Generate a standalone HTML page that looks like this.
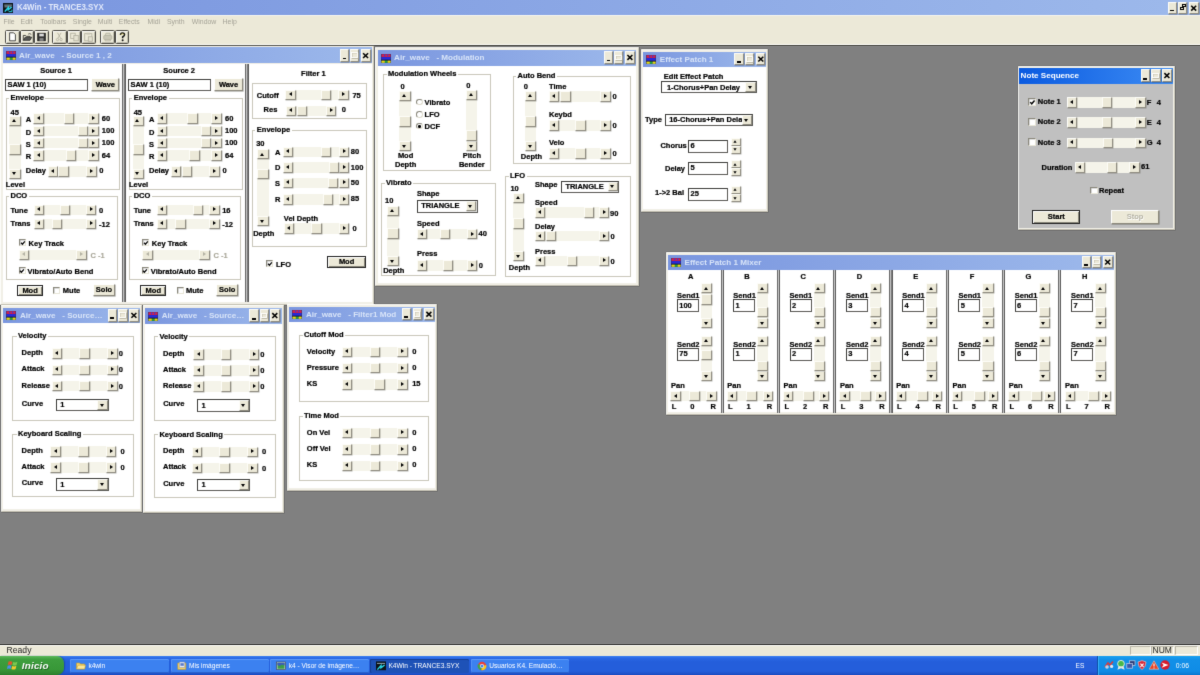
<!DOCTYPE html>
<html><head><meta charset="utf-8"><title>K4Win - TRANCE3.SYX</title>
<style>
*{box-sizing:border-box;margin:0;padding:0}
html,body{width:1200px;height:675px;overflow:hidden;background:#808080}
body{font-family:"Liberation Sans",sans-serif;font-size:7.5px;font-weight:bold;color:#111;position:relative}
#root{position:absolute;left:0;top:0;width:1200px;height:675px;overflow:hidden;will-change:transform;filter:url(#soft)}
#root div,#root i{position:absolute;display:block}
.t{white-space:nowrap;line-height:9px;height:9px;color:#000;-webkit-text-stroke:0.22px #000}
.g{color:#a8a698;-webkit-text-stroke:0.1px #a8a698}
.trk{background:#f5f4ea}
.btn{background:#ece9d8;border:1px solid;border-color:#fdfdf8 #8f8c80 #8f8c80 #fdfdf8;box-shadow:0.5px 0.5px 0 rgba(90,88,80,.45)}
.tb{box-shadow:0.5px 0.5px 0 rgba(60,60,60,.6)}
.grp{border:1px solid #c9c7ba;box-shadow:1px 1px 0 #fff, inset 1px 1px 0 #fff}
.edit{background:#fff;border:1px solid #3c3c3a;border-right-color:#5a5955;border-bottom-color:#5a5955;white-space:nowrap;overflow:hidden}
.edit span{position:absolute;left:1.4px;top:50%;margin-top:-5.3px;line-height:9px;color:#000;-webkit-text-stroke:0.2px #000}
.pb{background:#ece9d8;border:1px solid;border-color:#fff #8a877a #8a877a #fff;box-shadow:0.6px 0.6px 0 rgba(80,78,70,.55);text-align:center;color:#000;-webkit-text-stroke:0.22px #000;white-space:nowrap}
.pb.def{border-color:#222;box-shadow:inset 1px 1px 0 #fff, inset -1px -1px 0 #8a877a}
.pb.pdis{color:#b4b2a4;-webkit-text-stroke:0;text-shadow:0.5px 0.5px 0 #fff}
.chk{background:#fff;border:1px solid;border-color:#8a887c #e8e6d8 #e8e6d8 #8a887c;box-shadow:inset 0.6px 0.6px 0 #bbb}
.rad{background:#fff;border-radius:50%;border:1px solid;border-color:#8a887c #dddacc #dddacc #8a887c}
.dot{left:1.3px;top:1.3px;width:2.4px;height:2.4px;border-radius:50%;background:#000}
.al,.ar,.au,.ad{width:0;height:0;left:50%;top:50%;border:2.5px solid transparent}
.al{border-right-color:#000;border-left-width:0;margin:-2.5px 0 0 -1.8px;border-right-width:3px}
.ar{border-left-color:#000;border-right-width:0;margin:-2.5px 0 0 -1.2px;border-left-width:3px}
.au{border-bottom-color:#000;border-top-width:0;margin:-1.9px 0 0 -2.9px;border-bottom-width:3px;border-left-width:2.9px;border-right-width:2.9px}
.ad{border-top-color:#000;border-bottom-width:0;margin:-1.3px 0 0 -2.9px;border-top-width:3px;border-left-width:2.9px;border-right-width:2.9px}
.al.dis{border-right-color:#b4b2a4}.ar.dis{border-left-color:#b4b2a4}
.win{background:#f1efe6;border:1px solid;border-color:#fcfcf9 #d0cdc0 #c4c1b3 #fcfcf9;box-shadow:0.5px 0.5px 0 rgba(90,90,84,.55)}
.win.notop{border-top:none}
.ttl{background:linear-gradient(90deg,#7a96df,#9db9eb)}
.ttl.act{background:linear-gradient(90deg,#0a5ae0,#3d8cf4)}
.tt{font-size:8.1px;line-height:10px;height:10px;color:#d8e4f8;white-space:pre;overflow:hidden}
.tt.tta{color:#fff}
.ico{position:absolute;left:0;top:0}
.sep{background:linear-gradient(90deg,#6a6a6a 0,#666 24%,#c4c4c4 34%,#c8c8c8 54%,#5c5c5c 66%,#585858 100%)}
.m{font-weight:normal;font-size:6.9px;color:#a4a296;line-height:9px;white-space:nowrap}
.tk{font-weight:normal;font-size:6.6px;color:#fff;line-height:9px;white-space:nowrap}
.tkb{border-radius:1.5px;background:#3c81f0;box-shadow:inset 0 1px 0 #5e9af8, inset 0 -1px 0 #2a62cc, inset 1px 0 0 #5490f4}
.tkb.on{background:#1e52b7;box-shadow:inset 0 1px 0 #163f95, inset 1px 0 0 #163f95}
</style></head><body><svg width="0" height="0" style="position:absolute"><defs><filter id="soft" x="0" y="0" width="100%" height="100%" color-interpolation-filters="sRGB"><feConvolveMatrix order="3" kernelMatrix="0.01 0.08 0.01 0.08 0.64 0.08 0.01 0.08 0.01" divisor="1" edgeMode="duplicate" preserveAlpha="true"/></filter></defs></svg><div id="root">

<div class="" style="left:0px;top:0px;width:1200px;height:15.2px;background:linear-gradient(90deg,#7a96df,#9db9eb)"></div>
<div style="left:3px;top:3px;width:10.2px;height:9.6px;background:#101820"><svg viewBox="0 0 10 10" width="10.2" height="9.6" style="position:absolute;left:0;top:0"><rect width="10" height="10" fill="#0c1418"/><path d="M1 2.2 H9 M1.2 4 H8.5" stroke="#9fb0b8" stroke-width="1"/><path d="M1.5 9 L5.2 4.6 L5.2 7 L8.8 4.2" stroke="#28d8e8" stroke-width="1.5" fill="none"/><path d="M5.6 9 H9 V6.8" stroke="#28d8e8" stroke-width="1" fill="none"/></svg></div>
<div class="tt" style="left:16.8px;top:2.1px;font-size:9.2px;color:#e2e9fa;transform:scaleX(0.86);transform-origin:0 0;overflow:visible">K4Win - TRANCE3.SYX</div>
<div class="btn tb" style="left:1167.5px;top:1.5px;width:9.6px;height:12.2px;"><i style="left:1.4px;top:7.1px;width:3.8px;height:1.5px;background:#000"></i></div>
<div class="btn tb" style="left:1177.8px;top:1.5px;width:9.6px;height:12.2px;"><i style="left:3px;top:1.5px;width:4px;height:3.4px;border:1px solid #000;border-top-width:1.5px"></i><i style="left:1.2px;top:4.2px;width:4px;height:3.4px;border:1px solid #000;border-top-width:1.5px;background:#ece9d8"></i></div>
<div class="btn tb" style="left:1189px;top:1.5px;width:9.6px;height:12.2px;"><svg width="7.6" height="10.2" viewBox="0 0 7.6 10.2" style="position:absolute;left:0;top:0"><path d="M1.2 2.8 L6.2 7.6 M6.2 2.8 L1.2 7.6" stroke="#000" stroke-width="1.55"/></svg></div>
<div class="" style="left:0px;top:15.2px;width:1200px;height:30.2px;background:#ece9d8;border-top:1px solid #f6f5ee"></div>
<div class="m" style="left:3.4px;top:17.4px">File</div>
<div class="m" style="left:20.6px;top:17.4px">Edit</div>
<div class="m" style="left:40.2px;top:17.4px">Toolbars</div>
<div class="m" style="left:72.8px;top:17.4px">Single</div>
<div class="m" style="left:97.8px;top:17.4px">Multi</div>
<div class="m" style="left:118.8px;top:17.4px">Effects</div>
<div class="m" style="left:147.6px;top:17.4px">Midi</div>
<div class="m" style="left:167px;top:17.4px">Synth</div>
<div class="m" style="left:191.8px;top:17.4px">Window</div>
<div class="m" style="left:222.6px;top:17.4px">Help</div>
<div class="" style="left:0px;top:44.4px;width:1200px;height:1px;background:#fbfaf4"></div>
<div class="" style="left:0px;top:45.2px;width:1200px;height:1px;background:#55554f"></div>
<div class="" style="left:5.2px;top:30px;width:14.6px;height:13.6px;background:#ece9d8;border:1px solid #4c4a44;border-radius:1.5px;box-shadow:inset 0.7px 0.7px 0 #fff, inset -0.7px -0.7px 0 #b4b1a2"><svg viewBox="0 0 14 13" width="12.6" height="11.6" style="position:absolute;left:0;top:0"><path d="M4 2 H8.5 L10.5 4 V11 H4 Z" fill="#fff" stroke="#222" stroke-width="0.9"/></svg></div>
<div class="" style="left:19.6px;top:30px;width:14.6px;height:13.6px;background:#ece9d8;border:1px solid #4c4a44;border-radius:1.5px;box-shadow:inset 0.7px 0.7px 0 #fff, inset -0.7px -0.7px 0 #b4b1a2"><svg viewBox="0 0 14 13" width="12.6" height="11.6" style="position:absolute;left:0;top:0"><path d="M2.5 10.5 V5 H5 L6 6 H10 V7" fill="none" stroke="#222" stroke-width="0.9"/><path d="M2.5 10.5 L4.5 7 H12 L10 10.5 Z" fill="#555" stroke="#222" stroke-width="0.8"/><path d="M8 3.5 Q10 2 11.5 4" stroke="#222" stroke-width="0.8" fill="none"/></svg></div>
<div class="" style="left:34px;top:30px;width:14.6px;height:13.6px;background:#ece9d8;border:1px solid #4c4a44;border-radius:1.5px;box-shadow:inset 0.7px 0.7px 0 #fff, inset -0.7px -0.7px 0 #b4b1a2"><svg viewBox="0 0 14 13" width="12.6" height="11.6" style="position:absolute;left:0;top:0"><rect x="3" y="2.5" width="8.5" height="8.5" fill="#333" stroke="#111" stroke-width="0.8"/><rect x="4.8" y="3" width="5" height="3" fill="#ddd"/><rect x="5" y="8" width="4.5" height="3" fill="#888"/></svg></div>
<div class="" style="left:52.4px;top:30px;width:14.6px;height:13.6px;background:#ece9d8;border:1px solid #4c4a44;border-radius:1.5px;box-shadow:inset 0.7px 0.7px 0 #fff, inset -0.7px -0.7px 0 #b4b1a2"><svg viewBox="0 0 14 13" width="12.6" height="11.6" style="position:absolute;left:0;top:0"><path d="M5 2 L8.5 8 M9 2 L5.5 8" stroke="#b0ae9e" stroke-width="0.9"/><circle cx="5" cy="9.6" r="1.3" fill="none" stroke="#b0ae9e" stroke-width="0.9"/><circle cx="9" cy="9.6" r="1.3" fill="none" stroke="#b0ae9e" stroke-width="0.9"/></svg></div>
<div class="" style="left:66.9px;top:30px;width:14.6px;height:13.6px;background:#ece9d8;border:1px solid #4c4a44;border-radius:1.5px;box-shadow:inset 0.7px 0.7px 0 #fff, inset -0.7px -0.7px 0 #b4b1a2"><svg viewBox="0 0 14 13" width="12.6" height="11.6" style="position:absolute;left:0;top:0"><rect x="3" y="2.5" width="5" height="6" fill="none" stroke="#b0ae9e" stroke-width="0.9"/><rect x="6.5" y="5" width="5" height="6" fill="#e4e1d0" stroke="#b0ae9e" stroke-width="0.9"/></svg></div>
<div class="" style="left:81.4px;top:30px;width:14.6px;height:13.6px;background:#ece9d8;border:1px solid #4c4a44;border-radius:1.5px;box-shadow:inset 0.7px 0.7px 0 #fff, inset -0.7px -0.7px 0 #b4b1a2"><svg viewBox="0 0 14 13" width="12.6" height="11.6" style="position:absolute;left:0;top:0"><rect x="3" y="3" width="8" height="8" fill="none" stroke="#b0ae9e" stroke-width="0.9"/><rect x="5" y="2" width="4" height="2" fill="#c8c5b4"/><rect x="7" y="6.5" width="4.5" height="5" fill="#e4e1d0" stroke="#b0ae9e" stroke-width="0.9"/></svg></div>
<div class="" style="left:100.2px;top:30px;width:14.6px;height:13.6px;background:#ece9d8;border:1px solid #4c4a44;border-radius:1.5px;box-shadow:inset 0.7px 0.7px 0 #fff, inset -0.7px -0.7px 0 #b4b1a2"><svg viewBox="0 0 14 13" width="12.6" height="11.6" style="position:absolute;left:0;top:0"><path d="M4.5 5 L5.5 2.5 H10 L10.5 5" fill="#dcd9c8" stroke="#b0ae9e" stroke-width="0.9"/><rect x="3" y="5" width="9" height="4.5" rx="1" fill="#c8c5b4" stroke="#b0ae9e" stroke-width="0.9"/><path d="M4.5 9.5 V11 H10.5 V9.5" fill="none" stroke="#b0ae9e" stroke-width="0.9"/></svg></div>
<div class="" style="left:114.8px;top:30px;width:14.6px;height:13.6px;background:#ece9d8;border:1px solid #4c4a44;border-radius:1.5px;box-shadow:inset 0.7px 0.7px 0 #fff, inset -0.7px -0.7px 0 #b4b1a2"><svg viewBox="0 0 14 13" width="12.6" height="11.6" style="position:absolute;left:0;top:0"><path d="M5 4.5 Q5 2.2 7.2 2.2 Q9.5 2.2 9.5 4.3 Q9.5 5.6 7.4 6.6 V8.2" fill="none" stroke="#111" stroke-width="1.7"/><path d="M5.6 4.4 Q5.6 3 7.2 3 Q8.6 3 8.6 4.3" fill="none" stroke="#e8d860" stroke-width="0.7"/><circle cx="7.4" cy="10.3" r="1.1" fill="#111"/></svg></div>
<div class="win notop" style="left:0px;top:46.2px;width:374.4px;height:258.4px;"></div>
<div class="" style="left:2.6px;top:63.5px;width:369px;height:238.5px;background:#fff"></div>
<div class="ttl" style="left:2.6px;top:46.6px;width:369px;height:16.9px;"></div>
<div style="left:5.6px;top:50.75px;width:10px;height:9px"><svg class="ico" viewBox="0 0 10 9" width="10" height="9"><rect x="0" y="0" width="10" height="9" fill="#30306a"/><rect x="0.5" y="0.3" width="9" height="2.6" fill="#d8204c"/><rect x="3" y="0.6" width="1.3" height="1.6" fill="#3838d8"/><rect x="6" y="0.6" width="1.3" height="1.6" fill="#3838d8"/><rect x="0.5" y="3.1" width="9" height="2.6" fill="#2828e0"/><rect x="0" y="5.8" width="10" height="1" fill="#101030"/><rect x="0.5" y="6.6" width="3.3" height="2.2" fill="#e8e010"/><rect x="4" y="6.6" width="2.4" height="2.2" fill="#20a838"/><rect x="6.6" y="6.6" width="3" height="2.2" fill="#e8e010"/></svg></div>
<div class="tt" style="left:19.1px;top:50.55px;width:320.1px">Air_wave   - Source 1 , 2</div>
<div class="btn tb" style="left:340.2px;top:49.1px;width:9.2px;height:13px;"><i style="left:1.4px;top:7.9px;width:3.8px;height:1.5px;background:#000"></i></div>
<div class="btn tb" style="left:350.2px;top:49.1px;width:9.2px;height:13px;"><i style="left:0.3px;top:2.3px;width:6.3px;height:5.6px;border:1px solid #fdfdfa;border-top-width:1.4px;box-shadow:0.7px 0.7px 0 #aaa696, inset 0.6px 0.6px 0 #c8c4b4"></i></div>
<div class="btn tb" style="left:361.2px;top:49.1px;width:9.4px;height:13px;"><svg width="7.4" height="11" viewBox="0 0 7.4 11" style="position:absolute;left:0;top:0"><path d="M1.1 3.2 L6.1 8 M6.1 3.2 L1.1 8" stroke="#000" stroke-width="1.55"/></svg></div>
<div class="sep" style="left:121.8px;top:63.6px;width:4.4px;height:238.8px;"></div>
<div class="sep" style="left:245px;top:63.6px;width:4.4px;height:238.8px;"></div>
<div class="t" style="left:16px;top:66px;width:80px;text-align:center;">Source 1</div>
<div class="edit" style="left:5px;top:79px;width:82.5px;height:12.2px;"><span>SAW 1 (10)</span></div>
<div class="pb" style="left:91.2px;top:77.6px;width:28.3px;height:13.4px;line-height:11.4px">Wave</div>
<div class="grp" style="left:5.5px;top:97.5px;width:114px;height:92px;"></div>
<div class="t" style="left:9px;top:92.7px;background:#fff;padding:0 1.5px">Envelope</div>
<div class="t" style="left:10.5px;top:107.5px;">45</div>
<div class="trk" style="left:9.4px;top:116.3px;width:11.2px;height:62.4px;"></div>
<div class="btn" style="left:9.4px;top:116.3px;width:11.2px;height:10px;"><i class="au"></i></div>
<div class="btn" style="left:9.4px;top:168.7px;width:11.2px;height:10px;"><i class="ad"></i></div>
<div class="btn" style="left:9.4px;top:144.3px;width:11.2px;height:10.4px;"></div>
<div class="t" style="left:25.8px;top:115px;">A</div>
<div class="trk" style="left:33.4px;top:113.4px;width:65.2px;height:10.4px;"></div>
<div class="btn" style="left:33.4px;top:113.4px;width:10.4px;height:10.4px;"><i class="al"></i></div>
<div class="btn" style="left:88.2px;top:113.4px;width:10.4px;height:10.4px;"><i class="ar"></i></div>
<div class="btn" style="left:64px;top:113.4px;width:10.4px;height:10.4px;"></div>
<div class="t" style="left:101.8px;top:113.8px;">60</div>
<div class="t" style="left:25.8px;top:127.6px;">D</div>
<div class="trk" style="left:33.4px;top:126px;width:65.2px;height:10.4px;"></div>
<div class="btn" style="left:33.4px;top:126px;width:10.4px;height:10.4px;"><i class="al"></i></div>
<div class="btn" style="left:88.2px;top:126px;width:10.4px;height:10.4px;"><i class="ar"></i></div>
<div class="btn" style="left:77.8px;top:126px;width:10.4px;height:10.4px;"></div>
<div class="t" style="left:101.8px;top:126.4px;">100</div>
<div class="t" style="left:25.8px;top:139.6px;">S</div>
<div class="trk" style="left:33.4px;top:138px;width:65.2px;height:10.4px;"></div>
<div class="btn" style="left:33.4px;top:138px;width:10.4px;height:10.4px;"><i class="al"></i></div>
<div class="btn" style="left:88.2px;top:138px;width:10.4px;height:10.4px;"><i class="ar"></i></div>
<div class="btn" style="left:77.8px;top:138px;width:10.4px;height:10.4px;"></div>
<div class="t" style="left:101.8px;top:138.4px;">100</div>
<div class="t" style="left:25.8px;top:151.9px;">R</div>
<div class="trk" style="left:33.4px;top:150.3px;width:65.2px;height:10.4px;"></div>
<div class="btn" style="left:33.4px;top:150.3px;width:10.4px;height:10.4px;"><i class="al"></i></div>
<div class="btn" style="left:88.2px;top:150.3px;width:10.4px;height:10.4px;"><i class="ar"></i></div>
<div class="btn" style="left:66px;top:150.3px;width:10.4px;height:10.4px;"></div>
<div class="t" style="left:101.8px;top:150.7px;">64</div>
<div class="t" style="left:25.8px;top:166px;">Delay</div>
<div class="trk" style="left:47.6px;top:166.4px;width:49px;height:10.6px;"></div>
<div class="btn" style="left:47.6px;top:166.4px;width:10.4px;height:10.6px;"><i class="al"></i></div>
<div class="btn" style="left:86.2px;top:166.4px;width:10.4px;height:10.6px;"><i class="ar"></i></div>
<div class="btn" style="left:58.4px;top:166.4px;width:10.4px;height:10.6px;"></div>
<div class="t" style="left:99.2px;top:165.8px;">0</div>
<div class="t" style="left:5.8px;top:179.8px;">Level</div>
<div class="grp" style="left:5.5px;top:196.2px;width:112px;height:84.2px;"></div>
<div class="t" style="left:9px;top:191.4px;background:#fff;padding:0 1.5px">DCO</div>
<div class="t" style="left:10.5px;top:205.5px;">Tune</div>
<div class="trk" style="left:33.8px;top:204.8px;width:62.6px;height:10.4px;"></div>
<div class="btn" style="left:33.8px;top:204.8px;width:10.4px;height:10.4px;"><i class="al"></i></div>
<div class="btn" style="left:86px;top:204.8px;width:10.4px;height:10.4px;"><i class="ar"></i></div>
<div class="btn" style="left:60px;top:204.8px;width:10.4px;height:10.4px;"></div>
<div class="t" style="left:99px;top:205.8px;">0</div>
<div class="t" style="left:10.5px;top:218.9px;">Trans</div>
<div class="trk" style="left:33.8px;top:218.6px;width:62.6px;height:10.4px;"></div>
<div class="btn" style="left:33.8px;top:218.6px;width:10.4px;height:10.4px;"><i class="al"></i></div>
<div class="btn" style="left:86px;top:218.6px;width:10.4px;height:10.4px;"><i class="ar"></i></div>
<div class="btn" style="left:52px;top:218.6px;width:10.4px;height:10.4px;"></div>
<div class="t" style="left:99px;top:220.3px;">-12</div>
<div class="chk" style="left:19.2px;top:239.2px;width:7px;height:7px;"><svg width="5.8" height="5.8" viewBox="0 0 7 7" style="position:absolute;left:-0.4px;top:-0.4px"><path d="M1.3 3.3 L2.9 5.1 L5.9 1.6" stroke="#000" stroke-width="1.5" fill="none"/></svg></div>
<div class="t" style="left:28.6px;top:238.5px;">Key Track</div>
<div class="trk" style="left:19px;top:249.8px;width:67.6px;height:10.4px;"></div>
<div class="btn" style="left:19px;top:249.8px;width:10.4px;height:10.4px;"><i class="al dis"></i></div>
<div class="btn" style="left:76.2px;top:249.8px;width:10.4px;height:10.4px;"><i class="ar dis"></i></div>
<div class="t g" style="left:90.4px;top:250.8px;">C -1</div>
<div class="chk" style="left:18.6px;top:267.3px;width:7px;height:7px;"><svg width="5.8" height="5.8" viewBox="0 0 7 7" style="position:absolute;left:-0.4px;top:-0.4px"><path d="M1.3 3.3 L2.9 5.1 L5.9 1.6" stroke="#000" stroke-width="1.5" fill="none"/></svg></div>
<div class="t" style="left:27.6px;top:266.5px;">Vibrato/Auto Bend</div>
<div class="pb def" style="left:17px;top:285px;width:26.2px;height:11.2px;line-height:9.2px">Mod</div>
<div class="chk" style="left:53.4px;top:286.5px;width:7px;height:7px;"></div>
<div class="t" style="left:62.8px;top:285.8px;">Mute</div>
<div class="pb" style="left:93.2px;top:284.2px;width:21.6px;height:11.8px;line-height:9.8px">Solo</div>
<div class="t" style="left:139.2px;top:66px;width:80px;text-align:center;">Source 2</div>
<div class="edit" style="left:128.2px;top:79px;width:82.5px;height:12.2px;"><span>SAW 1 (10)</span></div>
<div class="pb" style="left:214.4px;top:77.6px;width:28.3px;height:13.4px;line-height:11.4px">Wave</div>
<div class="grp" style="left:128.7px;top:97.5px;width:114px;height:92px;"></div>
<div class="t" style="left:132.2px;top:92.7px;background:#fff;padding:0 1.5px">Envelope</div>
<div class="t" style="left:133.7px;top:107.5px;">45</div>
<div class="trk" style="left:132.6px;top:116.3px;width:11.2px;height:62.4px;"></div>
<div class="btn" style="left:132.6px;top:116.3px;width:11.2px;height:10px;"><i class="au"></i></div>
<div class="btn" style="left:132.6px;top:168.7px;width:11.2px;height:10px;"><i class="ad"></i></div>
<div class="btn" style="left:132.6px;top:144.3px;width:11.2px;height:10.4px;"></div>
<div class="t" style="left:149px;top:115px;">A</div>
<div class="trk" style="left:156.6px;top:113.4px;width:65.2px;height:10.4px;"></div>
<div class="btn" style="left:156.6px;top:113.4px;width:10.4px;height:10.4px;"><i class="al"></i></div>
<div class="btn" style="left:211.4px;top:113.4px;width:10.4px;height:10.4px;"><i class="ar"></i></div>
<div class="btn" style="left:187.2px;top:113.4px;width:10.4px;height:10.4px;"></div>
<div class="t" style="left:225px;top:113.8px;">60</div>
<div class="t" style="left:149px;top:127.6px;">D</div>
<div class="trk" style="left:156.6px;top:126px;width:65.2px;height:10.4px;"></div>
<div class="btn" style="left:156.6px;top:126px;width:10.4px;height:10.4px;"><i class="al"></i></div>
<div class="btn" style="left:211.4px;top:126px;width:10.4px;height:10.4px;"><i class="ar"></i></div>
<div class="btn" style="left:201px;top:126px;width:10.4px;height:10.4px;"></div>
<div class="t" style="left:225px;top:126.4px;">100</div>
<div class="t" style="left:149px;top:139.6px;">S</div>
<div class="trk" style="left:156.6px;top:138px;width:65.2px;height:10.4px;"></div>
<div class="btn" style="left:156.6px;top:138px;width:10.4px;height:10.4px;"><i class="al"></i></div>
<div class="btn" style="left:211.4px;top:138px;width:10.4px;height:10.4px;"><i class="ar"></i></div>
<div class="btn" style="left:201px;top:138px;width:10.4px;height:10.4px;"></div>
<div class="t" style="left:225px;top:138.4px;">100</div>
<div class="t" style="left:149px;top:151.9px;">R</div>
<div class="trk" style="left:156.6px;top:150.3px;width:65.2px;height:10.4px;"></div>
<div class="btn" style="left:156.6px;top:150.3px;width:10.4px;height:10.4px;"><i class="al"></i></div>
<div class="btn" style="left:211.4px;top:150.3px;width:10.4px;height:10.4px;"><i class="ar"></i></div>
<div class="btn" style="left:189.2px;top:150.3px;width:10.4px;height:10.4px;"></div>
<div class="t" style="left:225px;top:150.7px;">64</div>
<div class="t" style="left:149px;top:166px;">Delay</div>
<div class="trk" style="left:170.8px;top:166.4px;width:49px;height:10.6px;"></div>
<div class="btn" style="left:170.8px;top:166.4px;width:10.4px;height:10.6px;"><i class="al"></i></div>
<div class="btn" style="left:209.4px;top:166.4px;width:10.4px;height:10.6px;"><i class="ar"></i></div>
<div class="btn" style="left:181.6px;top:166.4px;width:10.4px;height:10.6px;"></div>
<div class="t" style="left:222.4px;top:165.8px;">0</div>
<div class="t" style="left:129px;top:179.8px;">Level</div>
<div class="grp" style="left:128.7px;top:196.2px;width:112px;height:84.2px;"></div>
<div class="t" style="left:132.2px;top:191.4px;background:#fff;padding:0 1.5px">DCO</div>
<div class="t" style="left:133.7px;top:205.5px;">Tune</div>
<div class="trk" style="left:157px;top:204.8px;width:62.6px;height:10.4px;"></div>
<div class="btn" style="left:157px;top:204.8px;width:10.4px;height:10.4px;"><i class="al"></i></div>
<div class="btn" style="left:209.2px;top:204.8px;width:10.4px;height:10.4px;"><i class="ar"></i></div>
<div class="btn" style="left:192.8px;top:204.8px;width:10.4px;height:10.4px;"></div>
<div class="t" style="left:222.2px;top:205.8px;">16</div>
<div class="t" style="left:133.7px;top:218.9px;">Trans</div>
<div class="trk" style="left:157px;top:218.6px;width:62.6px;height:10.4px;"></div>
<div class="btn" style="left:157px;top:218.6px;width:10.4px;height:10.4px;"><i class="al"></i></div>
<div class="btn" style="left:209.2px;top:218.6px;width:10.4px;height:10.4px;"><i class="ar"></i></div>
<div class="btn" style="left:175.2px;top:218.6px;width:10.4px;height:10.4px;"></div>
<div class="t" style="left:222.2px;top:220.3px;">-12</div>
<div class="chk" style="left:142.4px;top:239.2px;width:7px;height:7px;"><svg width="5.8" height="5.8" viewBox="0 0 7 7" style="position:absolute;left:-0.4px;top:-0.4px"><path d="M1.3 3.3 L2.9 5.1 L5.9 1.6" stroke="#000" stroke-width="1.5" fill="none"/></svg></div>
<div class="t" style="left:151.8px;top:238.5px;">Key Track</div>
<div class="trk" style="left:142.2px;top:249.8px;width:67.6px;height:10.4px;"></div>
<div class="btn" style="left:142.2px;top:249.8px;width:10.4px;height:10.4px;"><i class="al dis"></i></div>
<div class="btn" style="left:199.4px;top:249.8px;width:10.4px;height:10.4px;"><i class="ar dis"></i></div>
<div class="t g" style="left:213.6px;top:250.8px;">C -1</div>
<div class="chk" style="left:141.8px;top:267.3px;width:7px;height:7px;"><svg width="5.8" height="5.8" viewBox="0 0 7 7" style="position:absolute;left:-0.4px;top:-0.4px"><path d="M1.3 3.3 L2.9 5.1 L5.9 1.6" stroke="#000" stroke-width="1.5" fill="none"/></svg></div>
<div class="t" style="left:150.8px;top:266.5px;">Vibrato/Auto Bend</div>
<div class="pb def" style="left:140.2px;top:285px;width:26.2px;height:11.2px;line-height:9.2px">Mod</div>
<div class="chk" style="left:176.6px;top:286.5px;width:7px;height:7px;"></div>
<div class="t" style="left:186px;top:285.8px;">Mute</div>
<div class="pb" style="left:216.4px;top:284.2px;width:21.6px;height:11.8px;line-height:9.8px">Solo</div>
<div class="t" style="left:273.4px;top:68.5px;width:80px;text-align:center;">Filter 1</div>
<div class="grp" style="left:252px;top:83px;width:115px;height:36px;"></div>
<div class="t" style="left:256.8px;top:91.1px;">Cutoff</div>
<div class="trk" style="left:285.4px;top:89.6px;width:63.4px;height:10.4px;"></div>
<div class="btn" style="left:285.4px;top:89.6px;width:10.4px;height:10.4px;"><i class="al"></i></div>
<div class="btn" style="left:338.4px;top:89.6px;width:10.4px;height:10.4px;"><i class="ar"></i></div>
<div class="btn" style="left:320.6px;top:89.6px;width:10.4px;height:10.4px;"></div>
<div class="t" style="left:352.4px;top:90.5px;">75</div>
<div class="t" style="left:263.6px;top:104.9px;">Res</div>
<div class="trk" style="left:286px;top:105.6px;width:50.2px;height:10.4px;"></div>
<div class="btn" style="left:286px;top:105.6px;width:10.4px;height:10.4px;"><i class="al"></i></div>
<div class="btn" style="left:325.8px;top:105.6px;width:10.4px;height:10.4px;"><i class="ar"></i></div>
<div class="btn" style="left:297px;top:105.6px;width:10.4px;height:10.4px;"></div>
<div class="t" style="left:341.8px;top:105.1px;">0</div>
<div class="grp" style="left:252px;top:130px;width:115px;height:116.8px;"></div>
<div class="t" style="left:255.3px;top:125.2px;background:#fff;padding:0 1.5px">Envelope</div>
<div class="t" style="left:256.2px;top:138.5px;">30</div>
<div class="trk" style="left:257.4px;top:149.4px;width:11.2px;height:76.4px;"></div>
<div class="btn" style="left:257.4px;top:149.4px;width:11.2px;height:10px;"><i class="au"></i></div>
<div class="btn" style="left:257.4px;top:215.8px;width:11.2px;height:10px;"><i class="ad"></i></div>
<div class="btn" style="left:257.4px;top:168.8px;width:11.2px;height:10.2px;"></div>
<div class="t" style="left:275px;top:147.5px;">A</div>
<div class="trk" style="left:283px;top:146.6px;width:66px;height:10.6px;"></div>
<div class="btn" style="left:283px;top:146.6px;width:10.4px;height:10.6px;"><i class="al"></i></div>
<div class="btn" style="left:338.6px;top:146.6px;width:10.4px;height:10.6px;"><i class="ar"></i></div>
<div class="btn" style="left:321px;top:146.6px;width:10.4px;height:10.6px;"></div>
<div class="t" style="left:350.8px;top:146.9px;">80</div>
<div class="t" style="left:275px;top:163.1px;">D</div>
<div class="trk" style="left:283px;top:162.2px;width:66px;height:10.6px;"></div>
<div class="btn" style="left:283px;top:162.2px;width:10.4px;height:10.6px;"><i class="al"></i></div>
<div class="btn" style="left:338.6px;top:162.2px;width:10.4px;height:10.6px;"><i class="ar"></i></div>
<div class="btn" style="left:328.6px;top:162.2px;width:10.4px;height:10.6px;"></div>
<div class="t" style="left:350.8px;top:162.5px;">100</div>
<div class="t" style="left:275px;top:178.5px;">S</div>
<div class="trk" style="left:283px;top:177.6px;width:66px;height:10.6px;"></div>
<div class="btn" style="left:283px;top:177.6px;width:10.4px;height:10.6px;"><i class="al"></i></div>
<div class="btn" style="left:338.6px;top:177.6px;width:10.4px;height:10.6px;"><i class="ar"></i></div>
<div class="btn" style="left:328px;top:177.6px;width:10.4px;height:10.6px;"></div>
<div class="t" style="left:350.8px;top:177.9px;">50</div>
<div class="t" style="left:275px;top:194.9px;">R</div>
<div class="trk" style="left:283px;top:194px;width:66px;height:10.6px;"></div>
<div class="btn" style="left:283px;top:194px;width:10.4px;height:10.6px;"><i class="al"></i></div>
<div class="btn" style="left:338.6px;top:194px;width:10.4px;height:10.6px;"><i class="ar"></i></div>
<div class="btn" style="left:323px;top:194px;width:10.4px;height:10.6px;"></div>
<div class="t" style="left:350.8px;top:194.3px;">85</div>
<div class="t" style="left:283.8px;top:214.1px;">Vel Depth</div>
<div class="trk" style="left:283.8px;top:223px;width:65.4px;height:10.6px;"></div>
<div class="btn" style="left:283.8px;top:223px;width:10.4px;height:10.6px;"><i class="al"></i></div>
<div class="btn" style="left:338.8px;top:223px;width:10.4px;height:10.6px;"><i class="ar"></i></div>
<div class="btn" style="left:311px;top:223px;width:10.6px;height:10.6px;"></div>
<div class="t" style="left:352.4px;top:223.9px;">0</div>
<div class="t" style="left:253.2px;top:228.5px;">Depth</div>
<div class="chk" style="left:266.2px;top:260.1px;width:7px;height:7px;"><svg width="5.8" height="5.8" viewBox="0 0 7 7" style="position:absolute;left:-0.4px;top:-0.4px"><path d="M1.3 3.3 L2.9 5.1 L5.9 1.6" stroke="#000" stroke-width="1.5" fill="none"/></svg></div>
<div class="t" style="left:276px;top:259.5px;">LFO</div>
<div class="pb def" style="left:327.2px;top:255.6px;width:38.8px;height:12.2px;line-height:10.2px">Mod</div>
<div class="win" style="left:375px;top:47px;width:264px;height:238.6px;"></div>
<div class="" style="left:377.6px;top:65.6px;width:258.9px;height:217.4px;background:#fff"></div>
<div class="ttl" style="left:377.6px;top:50px;width:258.9px;height:15.6px;"></div>
<div style="left:380.6px;top:53.5px;width:10px;height:9px"><svg class="ico" viewBox="0 0 10 9" width="10" height="9"><rect x="0" y="0" width="10" height="9" fill="#30306a"/><rect x="0.5" y="0.3" width="9" height="2.6" fill="#d8204c"/><rect x="3" y="0.6" width="1.3" height="1.6" fill="#3838d8"/><rect x="6" y="0.6" width="1.3" height="1.6" fill="#3838d8"/><rect x="0.5" y="3.1" width="9" height="2.6" fill="#2828e0"/><rect x="0" y="5.8" width="10" height="1" fill="#101030"/><rect x="0.5" y="6.6" width="3.3" height="2.2" fill="#e8e010"/><rect x="4" y="6.6" width="2.4" height="2.2" fill="#20a838"/><rect x="6.6" y="6.6" width="3" height="2.2" fill="#e8e010"/></svg></div>
<div class="tt" style="left:394.1px;top:53.3px;width:209.1px">Air_wave   - Modulation</div>
<div class="btn tb" style="left:604.2px;top:51.4px;width:9.2px;height:12.7px;"><i style="left:1.4px;top:7.6px;width:3.8px;height:1.5px;background:#000"></i></div>
<div class="btn tb" style="left:614px;top:51.4px;width:9.4px;height:12.7px;"><i style="left:0.3px;top:2.15px;width:6.5px;height:5.6px;border:1px solid #fdfdfa;border-top-width:1.4px;box-shadow:0.7px 0.7px 0 #aaa696, inset 0.6px 0.6px 0 #c8c4b4"></i></div>
<div class="btn tb" style="left:625.4px;top:51.4px;width:10px;height:12.7px;"><svg width="8" height="10.7" viewBox="0 0 8 10.7" style="position:absolute;left:0;top:0"><path d="M1.4 3.05 L6.4 7.85 M6.4 3.05 L1.4 7.85" stroke="#000" stroke-width="1.55"/></svg></div>
<div class="grp" style="left:382.5px;top:73.8px;width:108px;height:96.8px;"></div>
<div class="t" style="left:386.5px;top:69px;background:#fff;padding:0 1.5px">Modulation Wheels</div>
<div class="t" style="left:400.6px;top:81.5px;">0</div>
<div class="trk" style="left:399.4px;top:91px;width:11.2px;height:60.2px;"></div>
<div class="btn" style="left:399.4px;top:91px;width:11.2px;height:10px;"><i class="au"></i></div>
<div class="btn" style="left:399.4px;top:141.2px;width:11.2px;height:10px;"><i class="ad"></i></div>
<div class="btn" style="left:399.4px;top:116px;width:11.2px;height:10.8px;"></div>
<div class="rad" style="left:416px;top:98.9px;width:6.6px;height:6.6px;"></div>
<div class="t" style="left:424.6px;top:97.9px;">Vibrato</div>
<div class="rad" style="left:416px;top:111.1px;width:6.6px;height:6.6px;"></div>
<div class="t" style="left:424.6px;top:110.1px;">LFO</div>
<div class="rad" style="left:416px;top:122.9px;width:6.6px;height:6.6px;"><i class="dot"></i></div>
<div class="t" style="left:424.6px;top:121.9px;">DCF</div>
<div class="t" style="left:365.6px;top:151.1px;width:80px;text-align:center;">Mod</div>
<div class="t" style="left:365.6px;top:159.5px;width:80px;text-align:center;">Depth</div>
<div class="t" style="left:466.2px;top:80.5px;">0</div>
<div class="trk" style="left:466px;top:90px;width:11.4px;height:61.2px;"></div>
<div class="btn" style="left:466px;top:90px;width:11.4px;height:10px;"><i class="au"></i></div>
<div class="btn" style="left:466px;top:141.2px;width:11.4px;height:10px;"><i class="ad"></i></div>
<div class="btn" style="left:466px;top:130.2px;width:11.4px;height:10.8px;"></div>
<div class="t" style="left:431.8px;top:151.1px;width:80px;text-align:center;">Pitch</div>
<div class="t" style="left:431.8px;top:159.5px;width:80px;text-align:center;">Bender</div>
<div class="grp" style="left:512.5px;top:75.5px;width:118.2px;height:88.8px;"></div>
<div class="t" style="left:516px;top:70.7px;background:#fff;padding:0 1.5px">Auto Bend</div>
<div class="t" style="left:523.8px;top:81.5px;">0</div>
<div class="trk" style="left:525px;top:91px;width:11.2px;height:60.2px;"></div>
<div class="btn" style="left:525px;top:91px;width:11.2px;height:10px;"><i class="au"></i></div>
<div class="btn" style="left:525px;top:141.2px;width:11.2px;height:10px;"><i class="ad"></i></div>
<div class="btn" style="left:525px;top:116px;width:11.2px;height:10.8px;"></div>
<div class="t" style="left:520.8px;top:152.3px;">Depth</div>
<div class="t" style="left:549px;top:81.5px;">Time</div>
<div class="trk" style="left:549px;top:91px;width:61.6px;height:10.6px;"></div>
<div class="btn" style="left:549px;top:91px;width:10.4px;height:10.6px;"><i class="al"></i></div>
<div class="btn" style="left:600.2px;top:91px;width:10.4px;height:10.6px;"><i class="ar"></i></div>
<div class="btn" style="left:560px;top:91px;width:10.6px;height:10.6px;"></div>
<div class="t" style="left:612.6px;top:92.1px;">0</div>
<div class="t" style="left:549px;top:109.5px;">Keybd</div>
<div class="trk" style="left:549px;top:120px;width:61.6px;height:10.6px;"></div>
<div class="btn" style="left:549px;top:120px;width:10.4px;height:10.6px;"><i class="al"></i></div>
<div class="btn" style="left:600.2px;top:120px;width:10.4px;height:10.6px;"><i class="ar"></i></div>
<div class="btn" style="left:575px;top:120px;width:10.6px;height:10.6px;"></div>
<div class="t" style="left:612.6px;top:121.1px;">0</div>
<div class="t" style="left:549px;top:137.5px;">Velo</div>
<div class="trk" style="left:549px;top:148px;width:61.6px;height:10.6px;"></div>
<div class="btn" style="left:549px;top:148px;width:10.4px;height:10.6px;"><i class="al"></i></div>
<div class="btn" style="left:600.2px;top:148px;width:10.4px;height:10.6px;"><i class="ar"></i></div>
<div class="btn" style="left:575px;top:148px;width:10.6px;height:10.6px;"></div>
<div class="t" style="left:612.6px;top:149.1px;">0</div>
<div class="grp" style="left:381.2px;top:183px;width:114.4px;height:93.2px;"></div>
<div class="t" style="left:384.5px;top:178.2px;background:#fff;padding:0 1.5px">Vibrato</div>
<div class="t" style="left:385px;top:195.9px;">10</div>
<div class="trk" style="left:387.4px;top:206px;width:11.2px;height:59.8px;"></div>
<div class="btn" style="left:387.4px;top:206px;width:11.2px;height:10px;"><i class="au"></i></div>
<div class="btn" style="left:387.4px;top:255.8px;width:11.2px;height:10px;"><i class="ad"></i></div>
<div class="btn" style="left:387.4px;top:228px;width:11.2px;height:10.8px;"></div>
<div class="t" style="left:383.2px;top:265.9px;">Depth</div>
<div class="t" style="left:417px;top:189.1px;">Shape</div>
<div class="edit" style="left:417px;top:199.5px;width:60.5px;height:13px;"><span style="left:3.2px;margin-top:-4.7px">TRIANGLE</span></div>
<div class="btn" style="left:465.9px;top:200.7px;width:10.6px;height:10.6px;"><i class="ad"></i></div>
<div class="t" style="left:417px;top:218.5px;">Speed</div>
<div class="trk" style="left:417px;top:228.8px;width:60.5px;height:10.5px;"></div>
<div class="btn" style="left:417px;top:228.8px;width:10.4px;height:10.5px;"><i class="al"></i></div>
<div class="btn" style="left:467.1px;top:228.8px;width:10.4px;height:10.5px;"><i class="ar"></i></div>
<div class="btn" style="left:439.5px;top:228.8px;width:10.5px;height:10.5px;"></div>
<div class="t" style="left:478.6px;top:229.1px;">40</div>
<div class="t" style="left:417px;top:249.1px;">Press</div>
<div class="trk" style="left:417px;top:260px;width:60.5px;height:10.5px;"></div>
<div class="btn" style="left:417px;top:260px;width:10.4px;height:10.5px;"><i class="al"></i></div>
<div class="btn" style="left:467.1px;top:260px;width:10.4px;height:10.5px;"><i class="ar"></i></div>
<div class="btn" style="left:442.5px;top:260px;width:10.5px;height:10.5px;"></div>
<div class="t" style="left:478.8px;top:261.1px;">0</div>
<div class="grp" style="left:504.5px;top:176.2px;width:126.8px;height:100.8px;"></div>
<div class="t" style="left:508.5px;top:171.4px;background:#fff;padding:0 1.5px">LFO</div>
<div class="t" style="left:510.4px;top:183.5px;">10</div>
<div class="trk" style="left:513px;top:193px;width:11.4px;height:68.2px;"></div>
<div class="btn" style="left:513px;top:193px;width:11.4px;height:10px;"><i class="au"></i></div>
<div class="btn" style="left:513px;top:251.2px;width:11.4px;height:10px;"><i class="ad"></i></div>
<div class="btn" style="left:513px;top:218px;width:11.4px;height:10.8px;"></div>
<div class="t" style="left:508.8px;top:262.5px;">Depth</div>
<div class="t" style="left:535px;top:179.5px;">Shape</div>
<div class="edit" style="left:561.2px;top:180.5px;width:58px;height:12.2px;"><span style="left:3.2px;margin-top:-4.7px">TRIANGLE</span></div>
<div class="btn" style="left:607.6px;top:181.7px;width:10.6px;height:9.8px;"><i class="ad"></i></div>
<div class="t" style="left:535px;top:197.5px;">Speed</div>
<div class="trk" style="left:535px;top:207px;width:74.2px;height:10.5px;"></div>
<div class="btn" style="left:535px;top:207px;width:10.4px;height:10.5px;"><i class="al"></i></div>
<div class="btn" style="left:598.8px;top:207px;width:10.4px;height:10.5px;"><i class="ar"></i></div>
<div class="btn" style="left:583.8px;top:207px;width:10.6px;height:10.5px;"></div>
<div class="t" style="left:610px;top:208.5px;">90</div>
<div class="t" style="left:535px;top:222.3px;">Delay</div>
<div class="trk" style="left:535px;top:231px;width:74.2px;height:10.4px;"></div>
<div class="btn" style="left:535px;top:231px;width:10.4px;height:10.4px;"><i class="al"></i></div>
<div class="btn" style="left:598.8px;top:231px;width:10.4px;height:10.4px;"><i class="ar"></i></div>
<div class="btn" style="left:545.5px;top:231px;width:10.4px;height:10.4px;"></div>
<div class="t" style="left:610.4px;top:231.7px;">0</div>
<div class="t" style="left:535px;top:246.5px;">Press</div>
<div class="trk" style="left:535px;top:255.8px;width:74.2px;height:10.4px;"></div>
<div class="btn" style="left:535px;top:255.8px;width:10.4px;height:10.4px;"><i class="al"></i></div>
<div class="btn" style="left:598.8px;top:255.8px;width:10.4px;height:10.4px;"><i class="ar"></i></div>
<div class="btn" style="left:567px;top:255.8px;width:10.4px;height:10.4px;"></div>
<div class="t" style="left:610.4px;top:256.5px;">0</div>
<div class="win" style="left:640.6px;top:49px;width:127.6px;height:163px;"></div>
<div class="" style="left:643.3px;top:67px;width:122.5px;height:142.3px;background:#fff"></div>
<div class="ttl" style="left:643.3px;top:52px;width:122.5px;height:15px;"></div>
<div style="left:646.3px;top:55.2px;width:10px;height:9px"><svg class="ico" viewBox="0 0 10 9" width="10" height="9"><rect x="0" y="0" width="10" height="9" fill="#30306a"/><rect x="0.5" y="0.3" width="9" height="2.6" fill="#d8204c"/><rect x="3" y="0.6" width="1.3" height="1.6" fill="#3838d8"/><rect x="6" y="0.6" width="1.3" height="1.6" fill="#3838d8"/><rect x="0.5" y="3.1" width="9" height="2.6" fill="#2828e0"/><rect x="0" y="5.8" width="10" height="1" fill="#101030"/><rect x="0.5" y="6.6" width="3.3" height="2.2" fill="#e8e010"/><rect x="4" y="6.6" width="2.4" height="2.2" fill="#20a838"/><rect x="6.6" y="6.6" width="3" height="2.2" fill="#e8e010"/></svg></div>
<div class="tt" style="left:659.8px;top:55px;width:73.6px">Effect Patch 1</div>
<div class="btn tb" style="left:734.4px;top:53.4px;width:9.4px;height:12.1px;"><i style="left:1.4px;top:7px;width:3.8px;height:1.5px;background:#000"></i></div>
<div class="btn tb" style="left:744.6px;top:53.4px;width:9.6px;height:12.1px;"><i style="left:0.3px;top:1.85px;width:6.7px;height:5.6px;border:1px solid #fdfdfa;border-top-width:1.4px;box-shadow:0.7px 0.7px 0 #aaa696, inset 0.6px 0.6px 0 #c8c4b4"></i></div>
<div class="btn tb" style="left:755.6px;top:53.4px;width:9.8px;height:12.1px;"><svg width="7.8" height="10.1" viewBox="0 0 7.8 10.1" style="position:absolute;left:0;top:0"><path d="M1.3 2.75 L6.3 7.55 M6.3 2.75 L1.3 7.55" stroke="#000" stroke-width="1.55"/></svg></div>
<div class="t" style="left:663.8px;top:72.3px;">Edit Effect Patch</div>
<div class="edit" style="left:660.5px;top:81px;width:96.2px;height:12.4px;"><span style="left:5.4px;margin-top:-4.7px">1-Chorus+Pan Delay</span></div>
<div class="btn" style="left:745.1px;top:82.2px;width:10.6px;height:10px;"><i class="ad"></i></div>
<div class="t" style="left:645px;top:115.1px;">Type</div>
<div class="edit" style="left:665px;top:113.8px;width:88.2px;height:12.2px;"><span style="left:3.2px;margin-top:-4.7px">16-Chorus+Pan Dela</span></div>
<div class="btn" style="left:741.6px;top:115px;width:10.6px;height:9.8px;"><i class="ad"></i></div>
<div class="t" style="left:660.4px;top:140.9px;">Chorus</div>
<div class="edit" style="left:688.2px;top:139.5px;width:39.4px;height:13px;"><span>6</span></div>
<div class="btn" style="left:730.8px;top:137.6px;width:10.4px;height:8px;"><i class="au" style="transform:scale(.8)"></i></div>
<div class="btn" style="left:730.8px;top:145.6px;width:10.4px;height:8px;"><i class="ad" style="transform:scale(.8)"></i></div>
<div class="t" style="left:665px;top:163.5px;">Delay</div>
<div class="edit" style="left:688.2px;top:162px;width:39.4px;height:12.6px;"><span>5</span></div>
<div class="btn" style="left:730.8px;top:160.4px;width:10.4px;height:8px;"><i class="au" style="transform:scale(.8)"></i></div>
<div class="btn" style="left:730.8px;top:168.4px;width:10.4px;height:8px;"><i class="ad" style="transform:scale(.8)"></i></div>
<div class="t" style="left:655px;top:187.9px;">1-&gt;2 Bal</div>
<div class="edit" style="left:688.2px;top:188px;width:39.4px;height:12.8px;"><span>25</span></div>
<div class="btn" style="left:730.8px;top:186px;width:10.4px;height:8px;"><i class="au" style="transform:scale(.8)"></i></div>
<div class="btn" style="left:730.8px;top:194px;width:10.4px;height:8px;"><i class="ad" style="transform:scale(.8)"></i></div>
<div class="win" style="left:665.6px;top:252.2px;width:450.4px;height:162.6px;"></div>
<div class="" style="left:668px;top:269.6px;width:445.8px;height:142.8px;background:#fff"></div>
<div class="ttl" style="left:668px;top:254.6px;width:445.8px;height:15px;"></div>
<div style="left:671px;top:257.8px;width:10px;height:9px"><svg class="ico" viewBox="0 0 10 9" width="10" height="9"><rect x="0" y="0" width="10" height="9" fill="#30306a"/><rect x="0.5" y="0.3" width="9" height="2.6" fill="#d8204c"/><rect x="3" y="0.6" width="1.3" height="1.6" fill="#3838d8"/><rect x="6" y="0.6" width="1.3" height="1.6" fill="#3838d8"/><rect x="0.5" y="3.1" width="9" height="2.6" fill="#2828e0"/><rect x="0" y="5.8" width="10" height="1" fill="#101030"/><rect x="0.5" y="6.6" width="3.3" height="2.2" fill="#e8e010"/><rect x="4" y="6.6" width="2.4" height="2.2" fill="#20a838"/><rect x="6.6" y="6.6" width="3" height="2.2" fill="#e8e010"/></svg></div>
<div class="tt" style="left:684.5px;top:257.6px;width:396.4px">Effect Patch 1 Mixer</div>
<div class="btn tb" style="left:1081.9px;top:256px;width:9.2px;height:12.1px;"><i style="left:1.4px;top:7px;width:3.8px;height:1.5px;background:#000"></i></div>
<div class="btn tb" style="left:1091.8px;top:256px;width:9.4px;height:12.1px;"><i style="left:0.3px;top:1.85px;width:6.5px;height:5.6px;border:1px solid #fdfdfa;border-top-width:1.4px;box-shadow:0.7px 0.7px 0 #aaa696, inset 0.6px 0.6px 0 #c8c4b4"></i></div>
<div class="btn tb" style="left:1103px;top:256px;width:9.6px;height:12.1px;"><svg width="7.6" height="10.1" viewBox="0 0 7.6 10.1" style="position:absolute;left:0;top:0"><path d="M1.2 2.75 L6.2 7.55 M6.2 2.75 L1.2 7.55" stroke="#000" stroke-width="1.55"/></svg></div>
<div class="sep" style="left:720.5px;top:269.8px;width:3.2px;height:143px;"></div>
<div class="t" style="left:650.6px;top:271.5px;width:80px;text-align:center;">A</div>
<div class="t" style="left:677px;top:290.5px;">Send1</div>
<div class="edit" style="left:676.9px;top:299.4px;width:22px;height:13px;"><span>100</span></div>
<div class="trk" style="left:700.9px;top:283.4px;width:11.2px;height:44.6px;"></div>
<div class="btn" style="left:700.9px;top:283.4px;width:11.2px;height:10px;"><i class="au"></i></div>
<div class="btn" style="left:700.9px;top:318px;width:11.2px;height:10px;"><i class="ad"></i></div>
<div class="btn" style="left:700.9px;top:294.4px;width:11.2px;height:10.2px;"></div>
<div class="t" style="left:677px;top:339.5px;">Send2</div>
<div class="edit" style="left:676.9px;top:348.2px;width:22px;height:12.8px;"><span>75</span></div>
<div class="trk" style="left:700.9px;top:336.2px;width:11.2px;height:44.8px;"></div>
<div class="btn" style="left:700.9px;top:336.2px;width:11.2px;height:10px;"><i class="au"></i></div>
<div class="btn" style="left:700.9px;top:371px;width:11.2px;height:10px;"><i class="ad"></i></div>
<div class="btn" style="left:700.9px;top:350px;width:11.2px;height:10.2px;"></div>
<div class="t" style="left:671px;top:380.5px;">Pan</div>
<div class="trk" style="left:670.4px;top:390.8px;width:46.4px;height:10.6px;"></div>
<div class="btn" style="left:670.4px;top:390.8px;width:10.4px;height:10.6px;"><i class="al"></i></div>
<div class="btn" style="left:706.4px;top:390.8px;width:10.4px;height:10.6px;"><i class="ar"></i></div>
<div class="btn" style="left:689px;top:390.8px;width:10.5px;height:10.6px;"></div>
<div class="t" style="left:671.8px;top:401.9px;">L</div>
<div class="t" style="left:652.4px;top:401.9px;width:80px;text-align:center;">0</div>
<div class="t" style="left:710.4px;top:401.9px;">R</div>
<div class="sep" style="left:776.8px;top:269.8px;width:3.2px;height:143px;"></div>
<div class="t" style="left:706.9px;top:271.5px;width:80px;text-align:center;">B</div>
<div class="t" style="left:733.3px;top:290.5px;">Send1</div>
<div class="edit" style="left:733.2px;top:299.4px;width:22px;height:13px;"><span>1</span></div>
<div class="trk" style="left:757.2px;top:283.4px;width:11.2px;height:44.6px;"></div>
<div class="btn" style="left:757.2px;top:283.4px;width:11.2px;height:10px;"><i class="au"></i></div>
<div class="btn" style="left:757.2px;top:318px;width:11.2px;height:10px;"><i class="ad"></i></div>
<div class="btn" style="left:757.2px;top:307.2px;width:11.2px;height:10.2px;"></div>
<div class="t" style="left:733.3px;top:339.5px;">Send2</div>
<div class="edit" style="left:733.2px;top:348.2px;width:22px;height:12.8px;"><span>1</span></div>
<div class="trk" style="left:757.2px;top:336.2px;width:11.2px;height:44.8px;"></div>
<div class="btn" style="left:757.2px;top:336.2px;width:11.2px;height:10px;"><i class="au"></i></div>
<div class="btn" style="left:757.2px;top:371px;width:11.2px;height:10px;"><i class="ad"></i></div>
<div class="btn" style="left:757.2px;top:360.8px;width:11.2px;height:10.2px;"></div>
<div class="t" style="left:727.3px;top:380.5px;">Pan</div>
<div class="trk" style="left:726.7px;top:390.8px;width:46.4px;height:10.6px;"></div>
<div class="btn" style="left:726.7px;top:390.8px;width:10.4px;height:10.6px;"><i class="al"></i></div>
<div class="btn" style="left:762.7px;top:390.8px;width:10.4px;height:10.6px;"><i class="ar"></i></div>
<div class="btn" style="left:746.07px;top:390.8px;width:10.5px;height:10.6px;"></div>
<div class="t" style="left:728.1px;top:401.9px;">L</div>
<div class="t" style="left:708.7px;top:401.9px;width:80px;text-align:center;">1</div>
<div class="t" style="left:766.7px;top:401.9px;">R</div>
<div class="sep" style="left:833.1px;top:269.8px;width:3.2px;height:143px;"></div>
<div class="t" style="left:763.2px;top:271.5px;width:80px;text-align:center;">C</div>
<div class="t" style="left:789.6px;top:290.5px;">Send1</div>
<div class="edit" style="left:789.5px;top:299.4px;width:22px;height:13px;"><span>2</span></div>
<div class="trk" style="left:813.5px;top:283.4px;width:11.2px;height:44.6px;"></div>
<div class="btn" style="left:813.5px;top:283.4px;width:11.2px;height:10px;"><i class="au"></i></div>
<div class="btn" style="left:813.5px;top:318px;width:11.2px;height:10px;"><i class="ad"></i></div>
<div class="btn" style="left:813.5px;top:307.2px;width:11.2px;height:10.2px;"></div>
<div class="t" style="left:789.6px;top:339.5px;">Send2</div>
<div class="edit" style="left:789.5px;top:348.2px;width:22px;height:12.8px;"><span>2</span></div>
<div class="trk" style="left:813.5px;top:336.2px;width:11.2px;height:44.8px;"></div>
<div class="btn" style="left:813.5px;top:336.2px;width:11.2px;height:10px;"><i class="au"></i></div>
<div class="btn" style="left:813.5px;top:371px;width:11.2px;height:10px;"><i class="ad"></i></div>
<div class="btn" style="left:813.5px;top:360.8px;width:11.2px;height:10.2px;"></div>
<div class="t" style="left:783.6px;top:380.5px;">Pan</div>
<div class="trk" style="left:783px;top:390.8px;width:46.4px;height:10.6px;"></div>
<div class="btn" style="left:783px;top:390.8px;width:10.4px;height:10.6px;"><i class="al"></i></div>
<div class="btn" style="left:819px;top:390.8px;width:10.4px;height:10.6px;"><i class="ar"></i></div>
<div class="btn" style="left:803.14px;top:390.8px;width:10.5px;height:10.6px;"></div>
<div class="t" style="left:784.4px;top:401.9px;">L</div>
<div class="t" style="left:765px;top:401.9px;width:80px;text-align:center;">2</div>
<div class="t" style="left:823px;top:401.9px;">R</div>
<div class="sep" style="left:889.4px;top:269.8px;width:3.2px;height:143px;"></div>
<div class="t" style="left:819.5px;top:271.5px;width:80px;text-align:center;">D</div>
<div class="t" style="left:845.9px;top:290.5px;">Send1</div>
<div class="edit" style="left:845.8px;top:299.4px;width:22px;height:13px;"><span>3</span></div>
<div class="trk" style="left:869.8px;top:283.4px;width:11.2px;height:44.6px;"></div>
<div class="btn" style="left:869.8px;top:283.4px;width:11.2px;height:10px;"><i class="au"></i></div>
<div class="btn" style="left:869.8px;top:318px;width:11.2px;height:10px;"><i class="ad"></i></div>
<div class="btn" style="left:869.8px;top:307.2px;width:11.2px;height:10.2px;"></div>
<div class="t" style="left:845.9px;top:339.5px;">Send2</div>
<div class="edit" style="left:845.8px;top:348.2px;width:22px;height:12.8px;"><span>3</span></div>
<div class="trk" style="left:869.8px;top:336.2px;width:11.2px;height:44.8px;"></div>
<div class="btn" style="left:869.8px;top:336.2px;width:11.2px;height:10px;"><i class="au"></i></div>
<div class="btn" style="left:869.8px;top:371px;width:11.2px;height:10px;"><i class="ad"></i></div>
<div class="btn" style="left:869.8px;top:360.8px;width:11.2px;height:10.2px;"></div>
<div class="t" style="left:839.9px;top:380.5px;">Pan</div>
<div class="trk" style="left:839.3px;top:390.8px;width:46.4px;height:10.6px;"></div>
<div class="btn" style="left:839.3px;top:390.8px;width:10.4px;height:10.6px;"><i class="al"></i></div>
<div class="btn" style="left:875.3px;top:390.8px;width:10.4px;height:10.6px;"><i class="ar"></i></div>
<div class="btn" style="left:860.21px;top:390.8px;width:10.5px;height:10.6px;"></div>
<div class="t" style="left:840.7px;top:401.9px;">L</div>
<div class="t" style="left:821.3px;top:401.9px;width:80px;text-align:center;">3</div>
<div class="t" style="left:879.3px;top:401.9px;">R</div>
<div class="sep" style="left:945.7px;top:269.8px;width:3.2px;height:143px;"></div>
<div class="t" style="left:875.8px;top:271.5px;width:80px;text-align:center;">E</div>
<div class="t" style="left:902.2px;top:290.5px;">Send1</div>
<div class="edit" style="left:902.1px;top:299.4px;width:22px;height:13px;"><span>4</span></div>
<div class="trk" style="left:926.1px;top:283.4px;width:11.2px;height:44.6px;"></div>
<div class="btn" style="left:926.1px;top:283.4px;width:11.2px;height:10px;"><i class="au"></i></div>
<div class="btn" style="left:926.1px;top:318px;width:11.2px;height:10px;"><i class="ad"></i></div>
<div class="btn" style="left:926.1px;top:307.2px;width:11.2px;height:10.2px;"></div>
<div class="t" style="left:902.2px;top:339.5px;">Send2</div>
<div class="edit" style="left:902.1px;top:348.2px;width:22px;height:12.8px;"><span>4</span></div>
<div class="trk" style="left:926.1px;top:336.2px;width:11.2px;height:44.8px;"></div>
<div class="btn" style="left:926.1px;top:336.2px;width:11.2px;height:10px;"><i class="au"></i></div>
<div class="btn" style="left:926.1px;top:371px;width:11.2px;height:10px;"><i class="ad"></i></div>
<div class="btn" style="left:926.1px;top:360.8px;width:11.2px;height:10.2px;"></div>
<div class="t" style="left:896.2px;top:380.5px;">Pan</div>
<div class="trk" style="left:895.6px;top:390.8px;width:46.4px;height:10.6px;"></div>
<div class="btn" style="left:895.6px;top:390.8px;width:10.4px;height:10.6px;"><i class="al"></i></div>
<div class="btn" style="left:931.6px;top:390.8px;width:10.4px;height:10.6px;"><i class="ar"></i></div>
<div class="btn" style="left:917.28px;top:390.8px;width:10.5px;height:10.6px;"></div>
<div class="t" style="left:897px;top:401.9px;">L</div>
<div class="t" style="left:877.6px;top:401.9px;width:80px;text-align:center;">4</div>
<div class="t" style="left:935.6px;top:401.9px;">R</div>
<div class="sep" style="left:1002px;top:269.8px;width:3.2px;height:143px;"></div>
<div class="t" style="left:932.1px;top:271.5px;width:80px;text-align:center;">F</div>
<div class="t" style="left:958.5px;top:290.5px;">Send1</div>
<div class="edit" style="left:958.4px;top:299.4px;width:22px;height:13px;"><span>5</span></div>
<div class="trk" style="left:982.4px;top:283.4px;width:11.2px;height:44.6px;"></div>
<div class="btn" style="left:982.4px;top:283.4px;width:11.2px;height:10px;"><i class="au"></i></div>
<div class="btn" style="left:982.4px;top:318px;width:11.2px;height:10px;"><i class="ad"></i></div>
<div class="btn" style="left:982.4px;top:307.2px;width:11.2px;height:10.2px;"></div>
<div class="t" style="left:958.5px;top:339.5px;">Send2</div>
<div class="edit" style="left:958.4px;top:348.2px;width:22px;height:12.8px;"><span>5</span></div>
<div class="trk" style="left:982.4px;top:336.2px;width:11.2px;height:44.8px;"></div>
<div class="btn" style="left:982.4px;top:336.2px;width:11.2px;height:10px;"><i class="au"></i></div>
<div class="btn" style="left:982.4px;top:371px;width:11.2px;height:10px;"><i class="ad"></i></div>
<div class="btn" style="left:982.4px;top:360.8px;width:11.2px;height:10.2px;"></div>
<div class="t" style="left:952.5px;top:380.5px;">Pan</div>
<div class="trk" style="left:951.9px;top:390.8px;width:46.4px;height:10.6px;"></div>
<div class="btn" style="left:951.9px;top:390.8px;width:10.4px;height:10.6px;"><i class="al"></i></div>
<div class="btn" style="left:987.9px;top:390.8px;width:10.4px;height:10.6px;"><i class="ar"></i></div>
<div class="btn" style="left:974.35px;top:390.8px;width:10.5px;height:10.6px;"></div>
<div class="t" style="left:953.3px;top:401.9px;">L</div>
<div class="t" style="left:933.9px;top:401.9px;width:80px;text-align:center;">5</div>
<div class="t" style="left:991.9px;top:401.9px;">R</div>
<div class="sep" style="left:1058.3px;top:269.8px;width:3.2px;height:143px;"></div>
<div class="t" style="left:988.4px;top:271.5px;width:80px;text-align:center;">G</div>
<div class="t" style="left:1014.8px;top:290.5px;">Send1</div>
<div class="edit" style="left:1014.7px;top:299.4px;width:22px;height:13px;"><span>6</span></div>
<div class="trk" style="left:1038.7px;top:283.4px;width:11.2px;height:44.6px;"></div>
<div class="btn" style="left:1038.7px;top:283.4px;width:11.2px;height:10px;"><i class="au"></i></div>
<div class="btn" style="left:1038.7px;top:318px;width:11.2px;height:10px;"><i class="ad"></i></div>
<div class="btn" style="left:1038.7px;top:307.2px;width:11.2px;height:10.2px;"></div>
<div class="t" style="left:1014.8px;top:339.5px;">Send2</div>
<div class="edit" style="left:1014.7px;top:348.2px;width:22px;height:12.8px;"><span>6</span></div>
<div class="trk" style="left:1038.7px;top:336.2px;width:11.2px;height:44.8px;"></div>
<div class="btn" style="left:1038.7px;top:336.2px;width:11.2px;height:10px;"><i class="au"></i></div>
<div class="btn" style="left:1038.7px;top:371px;width:11.2px;height:10px;"><i class="ad"></i></div>
<div class="btn" style="left:1038.7px;top:360.8px;width:11.2px;height:10.2px;"></div>
<div class="t" style="left:1008.8px;top:380.5px;">Pan</div>
<div class="trk" style="left:1008.2px;top:390.8px;width:46.4px;height:10.6px;"></div>
<div class="btn" style="left:1008.2px;top:390.8px;width:10.4px;height:10.6px;"><i class="al"></i></div>
<div class="btn" style="left:1044.2px;top:390.8px;width:10.4px;height:10.6px;"><i class="ar"></i></div>
<div class="btn" style="left:1031.42px;top:390.8px;width:10.5px;height:10.6px;"></div>
<div class="t" style="left:1009.6px;top:401.9px;">L</div>
<div class="t" style="left:990.2px;top:401.9px;width:80px;text-align:center;">6</div>
<div class="t" style="left:1048.2px;top:401.9px;">R</div>
<div class="t" style="left:1044.7px;top:271.5px;width:80px;text-align:center;">H</div>
<div class="t" style="left:1071.1px;top:290.5px;">Send1</div>
<div class="edit" style="left:1071px;top:299.4px;width:22px;height:13px;"><span>7</span></div>
<div class="trk" style="left:1095px;top:283.4px;width:11.2px;height:44.6px;"></div>
<div class="btn" style="left:1095px;top:283.4px;width:11.2px;height:10px;"><i class="au"></i></div>
<div class="btn" style="left:1095px;top:318px;width:11.2px;height:10px;"><i class="ad"></i></div>
<div class="btn" style="left:1095px;top:307.2px;width:11.2px;height:10.2px;"></div>
<div class="t" style="left:1071.1px;top:339.5px;">Send2</div>
<div class="edit" style="left:1071px;top:348.2px;width:22px;height:12.8px;"><span>7</span></div>
<div class="trk" style="left:1095px;top:336.2px;width:11.2px;height:44.8px;"></div>
<div class="btn" style="left:1095px;top:336.2px;width:11.2px;height:10px;"><i class="au"></i></div>
<div class="btn" style="left:1095px;top:371px;width:11.2px;height:10px;"><i class="ad"></i></div>
<div class="btn" style="left:1095px;top:360.8px;width:11.2px;height:10.2px;"></div>
<div class="t" style="left:1065.1px;top:380.5px;">Pan</div>
<div class="trk" style="left:1064.5px;top:390.8px;width:46.4px;height:10.6px;"></div>
<div class="btn" style="left:1064.5px;top:390.8px;width:10.4px;height:10.6px;"><i class="al"></i></div>
<div class="btn" style="left:1100.5px;top:390.8px;width:10.4px;height:10.6px;"><i class="ar"></i></div>
<div class="btn" style="left:1088.49px;top:390.8px;width:10.5px;height:10.6px;"></div>
<div class="t" style="left:1065.9px;top:401.9px;">L</div>
<div class="t" style="left:1046.5px;top:401.9px;width:80px;text-align:center;">7</div>
<div class="t" style="left:1104.5px;top:401.9px;">R</div>
<div class="win" style="left:0.6px;top:305.2px;width:141.8px;height:206.8px;"></div>
<div class="" style="left:3.4px;top:323px;width:136.6px;height:186.2px;background:#fff"></div>
<div class="ttl" style="left:3.4px;top:307.6px;width:136.6px;height:15.4px;"></div>
<div style="left:6.4px;top:311px;width:10px;height:9px"><svg class="ico" viewBox="0 0 10 9" width="10" height="9"><rect x="0" y="0" width="10" height="9" fill="#30306a"/><rect x="0.5" y="0.3" width="9" height="2.6" fill="#d8204c"/><rect x="3" y="0.6" width="1.3" height="1.6" fill="#3838d8"/><rect x="6" y="0.6" width="1.3" height="1.6" fill="#3838d8"/><rect x="0.5" y="3.1" width="9" height="2.6" fill="#2828e0"/><rect x="0" y="5.8" width="10" height="1" fill="#101030"/><rect x="0.5" y="6.6" width="3.3" height="2.2" fill="#e8e010"/><rect x="4" y="6.6" width="2.4" height="2.2" fill="#20a838"/><rect x="6.6" y="6.6" width="3" height="2.2" fill="#e8e010"/></svg></div>
<div class="tt" style="left:19.9px;top:310.8px;width:87.1px">Air_wave   - Source…</div>
<div class="btn tb" style="left:108px;top:309px;width:9.4px;height:12.5px;"><i style="left:1.4px;top:7.4px;width:3.8px;height:1.5px;background:#000"></i></div>
<div class="btn tb" style="left:118.2px;top:309px;width:9.4px;height:12.5px;"><i style="left:0.3px;top:2.05px;width:6.5px;height:5.6px;border:1px solid #fdfdfa;border-top-width:1.4px;box-shadow:0.7px 0.7px 0 #aaa696, inset 0.6px 0.6px 0 #c8c4b4"></i></div>
<div class="btn tb" style="left:129px;top:309px;width:10px;height:12.5px;"><svg width="8" height="10.5" viewBox="0 0 8 10.5" style="position:absolute;left:0;top:0"><path d="M1.4 2.95 L6.4 7.75 M6.4 2.95 L1.4 7.75" stroke="#000" stroke-width="1.55"/></svg></div>
<div class="grp" style="left:12.3px;top:335.8px;width:122px;height:85px;"></div>
<div class="t" style="left:16.5px;top:331px;background:#fff;padding:0 1.5px">Velocity</div>
<div class="t" style="left:21.6px;top:348.1px;">Depth</div>
<div class="trk" style="left:52px;top:348.4px;width:65.6px;height:10.6px;"></div>
<div class="btn" style="left:52px;top:348.4px;width:10.4px;height:10.6px;"><i class="al"></i></div>
<div class="btn" style="left:107.2px;top:348.4px;width:10.4px;height:10.6px;"><i class="ar"></i></div>
<div class="btn" style="left:79.4px;top:348.4px;width:10.4px;height:10.6px;"></div>
<div class="t" style="left:118.8px;top:349.1px;">0</div>
<div class="t" style="left:21.6px;top:364.3px;">Attack</div>
<div class="trk" style="left:52px;top:364.6px;width:65.6px;height:10.6px;"></div>
<div class="btn" style="left:52px;top:364.6px;width:10.4px;height:10.6px;"><i class="al"></i></div>
<div class="btn" style="left:107.2px;top:364.6px;width:10.4px;height:10.6px;"><i class="ar"></i></div>
<div class="btn" style="left:79.4px;top:364.6px;width:10.4px;height:10.6px;"></div>
<div class="t" style="left:118.8px;top:365.3px;">0</div>
<div class="t" style="left:21.6px;top:380.5px;">Release</div>
<div class="trk" style="left:52px;top:380.8px;width:65.6px;height:10.6px;"></div>
<div class="btn" style="left:52px;top:380.8px;width:10.4px;height:10.6px;"><i class="al"></i></div>
<div class="btn" style="left:107.2px;top:380.8px;width:10.4px;height:10.6px;"><i class="ar"></i></div>
<div class="btn" style="left:79.4px;top:380.8px;width:10.4px;height:10.6px;"></div>
<div class="t" style="left:118.8px;top:381.5px;">0</div>
<div class="t" style="left:21.8px;top:398.5px;">Curve</div>
<div class="edit" style="left:56px;top:398.6px;width:52.8px;height:12.8px;"><span style="left:3.2px;margin-top:-4.7px">1</span></div>
<div class="btn" style="left:97.2px;top:399.8px;width:10.6px;height:10.4px;"><i class="ad"></i></div>
<div class="grp" style="left:12.3px;top:433.7px;width:122px;height:63.8px;"></div>
<div class="t" style="left:16.5px;top:428.9px;background:#fff;padding:0 1.5px">Keyboard Scaling</div>
<div class="t" style="left:21.6px;top:445.5px;">Depth</div>
<div class="trk" style="left:50.4px;top:446px;width:65.8px;height:10.6px;"></div>
<div class="btn" style="left:50.4px;top:446px;width:10.4px;height:10.6px;"><i class="al"></i></div>
<div class="btn" style="left:105.8px;top:446px;width:10.4px;height:10.6px;"><i class="ar"></i></div>
<div class="btn" style="left:78px;top:446px;width:10.6px;height:10.6px;"></div>
<div class="t" style="left:120.6px;top:446.7px;">0</div>
<div class="t" style="left:21.6px;top:461.7px;">Attack</div>
<div class="trk" style="left:50.4px;top:462.2px;width:65.8px;height:10.6px;"></div>
<div class="btn" style="left:50.4px;top:462.2px;width:10.4px;height:10.6px;"><i class="al"></i></div>
<div class="btn" style="left:105.8px;top:462.2px;width:10.4px;height:10.6px;"><i class="ar"></i></div>
<div class="btn" style="left:78px;top:462.2px;width:10.6px;height:10.6px;"></div>
<div class="t" style="left:120.6px;top:462.9px;">0</div>
<div class="t" style="left:21.8px;top:478.1px;">Curve</div>
<div class="edit" style="left:56px;top:478.2px;width:52.8px;height:12.6px;"><span style="left:3.2px;margin-top:-4.7px">1</span></div>
<div class="btn" style="left:97.2px;top:479.4px;width:10.6px;height:10.2px;"><i class="ad"></i></div>
<div class="win" style="left:142.6px;top:305.4px;width:141.6px;height:207.8px;"></div>
<div class="" style="left:145.2px;top:323.8px;width:136.4px;height:186.8px;background:#fff"></div>
<div class="ttl" style="left:145.2px;top:308px;width:136.4px;height:15.8px;"></div>
<div style="left:148.2px;top:311.6px;width:10px;height:9px"><svg class="ico" viewBox="0 0 10 9" width="10" height="9"><rect x="0" y="0" width="10" height="9" fill="#30306a"/><rect x="0.5" y="0.3" width="9" height="2.6" fill="#d8204c"/><rect x="3" y="0.6" width="1.3" height="1.6" fill="#3838d8"/><rect x="6" y="0.6" width="1.3" height="1.6" fill="#3838d8"/><rect x="0.5" y="3.1" width="9" height="2.6" fill="#2828e0"/><rect x="0" y="5.8" width="10" height="1" fill="#101030"/><rect x="0.5" y="6.6" width="3.3" height="2.2" fill="#e8e010"/><rect x="4" y="6.6" width="2.4" height="2.2" fill="#20a838"/><rect x="6.6" y="6.6" width="3" height="2.2" fill="#e8e010"/></svg></div>
<div class="tt" style="left:161.7px;top:311.4px;width:86.7px">Air_wave   - Source…</div>
<div class="btn tb" style="left:249.4px;top:309.4px;width:9.4px;height:12.9px;"><i style="left:1.4px;top:7.8px;width:3.8px;height:1.5px;background:#000"></i></div>
<div class="btn tb" style="left:259.6px;top:309.4px;width:9.4px;height:12.9px;"><i style="left:0.3px;top:2.25px;width:6.5px;height:5.6px;border:1px solid #fdfdfa;border-top-width:1.4px;box-shadow:0.7px 0.7px 0 #aaa696, inset 0.6px 0.6px 0 #c8c4b4"></i></div>
<div class="btn tb" style="left:270.4px;top:309.4px;width:9.8px;height:12.9px;"><svg width="7.8" height="10.9" viewBox="0 0 7.8 10.9" style="position:absolute;left:0;top:0"><path d="M1.3 3.15 L6.3 7.95 M6.3 3.15 L1.3 7.95" stroke="#000" stroke-width="1.55"/></svg></div>
<div class="grp" style="left:153.7px;top:336.4px;width:122px;height:85px;"></div>
<div class="t" style="left:157.9px;top:331.6px;background:#fff;padding:0 1.5px">Velocity</div>
<div class="t" style="left:163px;top:348.7px;">Depth</div>
<div class="trk" style="left:193.4px;top:349px;width:65.6px;height:10.6px;"></div>
<div class="btn" style="left:193.4px;top:349px;width:10.4px;height:10.6px;"><i class="al"></i></div>
<div class="btn" style="left:248.6px;top:349px;width:10.4px;height:10.6px;"><i class="ar"></i></div>
<div class="btn" style="left:220.8px;top:349px;width:10.4px;height:10.6px;"></div>
<div class="t" style="left:260.2px;top:349.7px;">0</div>
<div class="t" style="left:163px;top:364.9px;">Attack</div>
<div class="trk" style="left:193.4px;top:365.2px;width:65.6px;height:10.6px;"></div>
<div class="btn" style="left:193.4px;top:365.2px;width:10.4px;height:10.6px;"><i class="al"></i></div>
<div class="btn" style="left:248.6px;top:365.2px;width:10.4px;height:10.6px;"><i class="ar"></i></div>
<div class="btn" style="left:220.8px;top:365.2px;width:10.4px;height:10.6px;"></div>
<div class="t" style="left:260.2px;top:365.9px;">0</div>
<div class="t" style="left:163px;top:381.1px;">Release</div>
<div class="trk" style="left:193.4px;top:381.4px;width:65.6px;height:10.6px;"></div>
<div class="btn" style="left:193.4px;top:381.4px;width:10.4px;height:10.6px;"><i class="al"></i></div>
<div class="btn" style="left:248.6px;top:381.4px;width:10.4px;height:10.6px;"><i class="ar"></i></div>
<div class="btn" style="left:220.8px;top:381.4px;width:10.4px;height:10.6px;"></div>
<div class="t" style="left:260.2px;top:382.1px;">0</div>
<div class="t" style="left:163.2px;top:399.1px;">Curve</div>
<div class="edit" style="left:197.4px;top:399.2px;width:52.8px;height:12.8px;"><span style="left:3.2px;margin-top:-4.7px">1</span></div>
<div class="btn" style="left:238.6px;top:400.4px;width:10.6px;height:10.4px;"><i class="ad"></i></div>
<div class="grp" style="left:153.7px;top:434.3px;width:122px;height:63.8px;"></div>
<div class="t" style="left:157.9px;top:429.5px;background:#fff;padding:0 1.5px">Keyboard Scaling</div>
<div class="t" style="left:163px;top:446.1px;">Depth</div>
<div class="trk" style="left:191.8px;top:446.6px;width:65.8px;height:10.6px;"></div>
<div class="btn" style="left:191.8px;top:446.6px;width:10.4px;height:10.6px;"><i class="al"></i></div>
<div class="btn" style="left:247.2px;top:446.6px;width:10.4px;height:10.6px;"><i class="ar"></i></div>
<div class="btn" style="left:219.4px;top:446.6px;width:10.6px;height:10.6px;"></div>
<div class="t" style="left:262px;top:447.3px;">0</div>
<div class="t" style="left:163px;top:462.3px;">Attack</div>
<div class="trk" style="left:191.8px;top:462.8px;width:65.8px;height:10.6px;"></div>
<div class="btn" style="left:191.8px;top:462.8px;width:10.4px;height:10.6px;"><i class="al"></i></div>
<div class="btn" style="left:247.2px;top:462.8px;width:10.4px;height:10.6px;"><i class="ar"></i></div>
<div class="btn" style="left:219.4px;top:462.8px;width:10.6px;height:10.6px;"></div>
<div class="t" style="left:262px;top:463.5px;">0</div>
<div class="t" style="left:163.2px;top:478.7px;">Curve</div>
<div class="edit" style="left:197.4px;top:478.8px;width:52.8px;height:12.6px;"><span style="left:3.2px;margin-top:-4.7px">1</span></div>
<div class="btn" style="left:238.6px;top:480px;width:10.6px;height:10.2px;"><i class="ad"></i></div>
<div class="win" style="left:286.6px;top:304.4px;width:150.6px;height:186.6px;"></div>
<div class="" style="left:289.4px;top:322px;width:145.2px;height:166.2px;background:#fff"></div>
<div class="ttl" style="left:289.4px;top:306.8px;width:145.2px;height:15.2px;"></div>
<div style="left:292.4px;top:310.1px;width:10px;height:9px"><svg class="ico" viewBox="0 0 10 9" width="10" height="9"><rect x="0" y="0" width="10" height="9" fill="#30306a"/><rect x="0.5" y="0.3" width="9" height="2.6" fill="#d8204c"/><rect x="3" y="0.6" width="1.3" height="1.6" fill="#3838d8"/><rect x="6" y="0.6" width="1.3" height="1.6" fill="#3838d8"/><rect x="0.5" y="3.1" width="9" height="2.6" fill="#2828e0"/><rect x="0" y="5.8" width="10" height="1" fill="#101030"/><rect x="0.5" y="6.6" width="3.3" height="2.2" fill="#e8e010"/><rect x="4" y="6.6" width="2.4" height="2.2" fill="#20a838"/><rect x="6.6" y="6.6" width="3" height="2.2" fill="#e8e010"/></svg></div>
<div class="tt" style="left:305.9px;top:309.9px;width:95.1px">Air_wave   - Filter1 Mod</div>
<div class="btn tb" style="left:402px;top:308.2px;width:9.4px;height:12.3px;"><i style="left:1.4px;top:7.2px;width:3.8px;height:1.5px;background:#000"></i></div>
<div class="btn tb" style="left:412.6px;top:308.2px;width:9.4px;height:12.3px;"><i style="left:0.3px;top:1.95px;width:6.5px;height:5.6px;border:1px solid #fdfdfa;border-top-width:1.4px;box-shadow:0.7px 0.7px 0 #aaa696, inset 0.6px 0.6px 0 #c8c4b4"></i></div>
<div class="btn tb" style="left:424px;top:308.2px;width:10px;height:12.3px;"><svg width="8" height="10.3" viewBox="0 0 8 10.3" style="position:absolute;left:0;top:0"><path d="M1.4 2.85 L6.4 7.65 M6.4 2.85 L1.4 7.65" stroke="#000" stroke-width="1.55"/></svg></div>
<div class="grp" style="left:298.6px;top:334.8px;width:130px;height:67.6px;"></div>
<div class="t" style="left:302.5px;top:330px;background:#fff;padding:0 1.5px">Cutoff Mod</div>
<div class="t" style="left:306.8px;top:346.5px;">Velocity</div>
<div class="trk" style="left:342px;top:346.6px;width:65.6px;height:10.4px;"></div>
<div class="btn" style="left:342px;top:346.6px;width:10.4px;height:10.4px;"><i class="al"></i></div>
<div class="btn" style="left:397.2px;top:346.6px;width:10.4px;height:10.4px;"><i class="ar"></i></div>
<div class="btn" style="left:369.6px;top:346.6px;width:10.4px;height:10.4px;"></div>
<div class="t" style="left:412.2px;top:346.5px;">0</div>
<div class="t" style="left:306.8px;top:362.9px;">Pressure</div>
<div class="trk" style="left:342px;top:363px;width:65.6px;height:10.4px;"></div>
<div class="btn" style="left:342px;top:363px;width:10.4px;height:10.4px;"><i class="al"></i></div>
<div class="btn" style="left:397.2px;top:363px;width:10.4px;height:10.4px;"><i class="ar"></i></div>
<div class="btn" style="left:369.6px;top:363px;width:10.4px;height:10.4px;"></div>
<div class="t" style="left:412.2px;top:362.9px;">0</div>
<div class="t" style="left:306.8px;top:379.1px;">KS</div>
<div class="trk" style="left:342px;top:379.2px;width:65.6px;height:10.4px;"></div>
<div class="btn" style="left:342px;top:379.2px;width:10.4px;height:10.4px;"><i class="al"></i></div>
<div class="btn" style="left:397.2px;top:379.2px;width:10.4px;height:10.4px;"><i class="ar"></i></div>
<div class="btn" style="left:374.2px;top:379.2px;width:10.4px;height:10.4px;"></div>
<div class="t" style="left:412.2px;top:379.1px;">15</div>
<div class="grp" style="left:298.6px;top:415.6px;width:130px;height:65.2px;"></div>
<div class="t" style="left:302.5px;top:410.8px;background:#fff;padding:0 1.5px">Time Mod</div>
<div class="t" style="left:306.8px;top:427.5px;">On Vel</div>
<div class="trk" style="left:342px;top:427.8px;width:65.6px;height:10.4px;"></div>
<div class="btn" style="left:342px;top:427.8px;width:10.4px;height:10.4px;"><i class="al"></i></div>
<div class="btn" style="left:397.2px;top:427.8px;width:10.4px;height:10.4px;"><i class="ar"></i></div>
<div class="btn" style="left:369.6px;top:427.8px;width:10.4px;height:10.4px;"></div>
<div class="t" style="left:412.2px;top:427.5px;">0</div>
<div class="t" style="left:306.8px;top:443.9px;">Off Vel</div>
<div class="trk" style="left:342px;top:444.2px;width:65.6px;height:10.4px;"></div>
<div class="btn" style="left:342px;top:444.2px;width:10.4px;height:10.4px;"><i class="al"></i></div>
<div class="btn" style="left:397.2px;top:444.2px;width:10.4px;height:10.4px;"><i class="ar"></i></div>
<div class="btn" style="left:369.6px;top:444.2px;width:10.4px;height:10.4px;"></div>
<div class="t" style="left:412.2px;top:443.9px;">0</div>
<div class="t" style="left:306.8px;top:460.3px;">KS</div>
<div class="trk" style="left:342px;top:460.6px;width:65.6px;height:10.4px;"></div>
<div class="btn" style="left:342px;top:460.6px;width:10.4px;height:10.4px;"><i class="al"></i></div>
<div class="btn" style="left:397.2px;top:460.6px;width:10.4px;height:10.4px;"><i class="ar"></i></div>
<div class="btn" style="left:369.6px;top:460.6px;width:10.4px;height:10.4px;"></div>
<div class="t" style="left:412.2px;top:460.3px;">0</div>
<div class="win" style="left:1017.6px;top:65.8px;width:157.4px;height:163.8px;"></div>
<div class="" style="left:1019.4px;top:83.8px;width:153.8px;height:144px;background:#c0c0c0"></div>
<div class="ttl act" style="left:1019.4px;top:68px;width:153.8px;height:15.8px;"></div>
<div class="tt tta" style="left:1020.6px;top:71.4px;width:119.4px">Note Sequence</div>
<div class="btn tb" style="left:1141px;top:69.4px;width:9.2px;height:12.9px;"><i style="left:1.4px;top:7.8px;width:3.8px;height:1.5px;background:#000"></i></div>
<div class="btn tb" style="left:1151.2px;top:69.4px;width:9.6px;height:12.9px;"><i style="left:0.3px;top:2.25px;width:6.7px;height:5.6px;border:1px solid #fdfdfa;border-top-width:1.4px;box-shadow:0.7px 0.7px 0 #aaa696, inset 0.6px 0.6px 0 #c8c4b4"></i></div>
<div class="btn tb" style="left:1162px;top:69.4px;width:10px;height:12.9px;"><svg width="8" height="10.9" viewBox="0 0 8 10.9" style="position:absolute;left:0;top:0"><path d="M1.4 3.15 L6.4 7.95 M6.4 3.15 L1.4 7.95" stroke="#000" stroke-width="1.55"/></svg></div>
<div class="chk" style="left:1028.4px;top:97.9px;width:7.8px;height:7.8px;"><svg width="6.6" height="6.6" viewBox="0 0 7 7" style="position:absolute;left:-0.4px;top:-0.4px"><path d="M1.3 3.3 L2.9 5.1 L5.9 1.6" stroke="#000" stroke-width="1.5" fill="none"/></svg></div>
<div class="t" style="left:1037.8px;top:97.3px;">Note 1</div>
<div class="trk" style="left:1067px;top:97.2px;width:78.8px;height:10.6px;"></div>
<div class="btn" style="left:1067px;top:97.2px;width:10.4px;height:10.6px;"><i class="al"></i></div>
<div class="btn" style="left:1135.4px;top:97.2px;width:10.4px;height:10.6px;"><i class="ar"></i></div>
<div class="btn" style="left:1102px;top:97.2px;width:10.4px;height:10.6px;"></div>
<div class="t" style="left:1146.8px;top:97.5px;">F</div>
<div class="t" style="left:1156.8px;top:97.5px;">4</div>
<div class="chk" style="left:1028.4px;top:117.9px;width:7.8px;height:7.8px;"></div>
<div class="t" style="left:1037.8px;top:117.3px;">Note 2</div>
<div class="trk" style="left:1067px;top:117.2px;width:78.8px;height:10.6px;"></div>
<div class="btn" style="left:1067px;top:117.2px;width:10.4px;height:10.6px;"><i class="al"></i></div>
<div class="btn" style="left:1135.4px;top:117.2px;width:10.4px;height:10.6px;"><i class="ar"></i></div>
<div class="btn" style="left:1102px;top:117.2px;width:10.4px;height:10.6px;"></div>
<div class="t" style="left:1146.8px;top:117.5px;">E</div>
<div class="t" style="left:1156.8px;top:117.5px;">4</div>
<div class="chk" style="left:1028.4px;top:138.3px;width:7.8px;height:7.8px;"></div>
<div class="t" style="left:1037.8px;top:137.7px;">Note 3</div>
<div class="trk" style="left:1067px;top:137.6px;width:78.8px;height:10.6px;"></div>
<div class="btn" style="left:1067px;top:137.6px;width:10.4px;height:10.6px;"><i class="al"></i></div>
<div class="btn" style="left:1135.4px;top:137.6px;width:10.4px;height:10.6px;"><i class="ar"></i></div>
<div class="btn" style="left:1103px;top:137.6px;width:10.4px;height:10.6px;"></div>
<div class="t" style="left:1146.8px;top:137.9px;">G</div>
<div class="t" style="left:1156.8px;top:137.9px;">4</div>
<div class="t" style="left:1041.6px;top:163.1px;">Duration</div>
<div class="trk" style="left:1074.8px;top:161.8px;width:65px;height:10.8px;"></div>
<div class="btn" style="left:1074.8px;top:161.8px;width:10.4px;height:10.8px;"><i class="al"></i></div>
<div class="btn" style="left:1129.4px;top:161.8px;width:10.4px;height:10.8px;"><i class="ar"></i></div>
<div class="btn" style="left:1106.8px;top:161.8px;width:9.8px;height:10.8px;"></div>
<div class="t" style="left:1141px;top:161.5px;">61</div>
<div class="chk" style="left:1090.2px;top:186.8px;width:7.6px;height:7.6px;"></div>
<div class="t" style="left:1099px;top:186.3px;">Repeat</div>
<div class="pb def" style="left:1032.2px;top:210.4px;width:48.2px;height:14px;line-height:12px">Start</div>
<div class="pb pdis" style="left:1111px;top:210.4px;width:48px;height:14px;line-height:12px">Stop</div>
<div class="" style="left:0px;top:643.6px;width:1200px;height:1.2px;background:#3c3c3a"></div>
<div class="" style="left:0px;top:644.8px;width:1200px;height:11.6px;background:#ece9d8;border-top:1px solid #fbfaf4"></div>
<div class="m" style="left:6.6px;top:646.2px;color:#1c1c1c;font-size:8.6px">Ready</div>
<div class="" style="left:1130.4px;top:646px;width:20.2px;height:9.4px;border:1px solid;border-color:#b8b5a6 #fff #fff #b8b5a6"></div>
<div class="" style="left:1151.2px;top:646px;width:22.8px;height:9.4px;border:1px solid;border-color:#b8b5a6 #fff #fff #b8b5a6"></div>
<div class="" style="left:1175px;top:646px;width:22.6px;height:9.4px;border:1px solid;border-color:#b8b5a6 #fff #fff #b8b5a6"></div>
<div class="m" style="left:1152.6px;top:645.8px;color:#1c1c1c;font-size:8.5px">NUM</div>
<div class="" style="left:0px;top:656.4px;width:1200px;height:18.6px;background:linear-gradient(180deg,#3a80f2 0,#2a68e4 12%,#245edb 30%,#245edb 80%,#1d4cc0 100%)"></div>
<div class="" style="left:0px;top:656.4px;width:64px;height:18.6px;background:linear-gradient(180deg,#5ab85a 0,#3e9e3e 18%,#389838 70%,#2d7f2d 100%);border-radius:0 7px 7px 0;box-shadow:1px 0 1px #1c4ab0"></div>
<div style="left:7px;top:659.6px;width:12px;height:11px"><svg viewBox="0 0 12 11" width="12" height="11" style="position:absolute;left:0;top:0"><path d="M1.6 1.6 Q3.4 0.6 5.4 1.8 L4.6 5 Q2.8 4 0.8 5 Z" fill="#e8542c"/><path d="M6.2 2 Q8.2 3 10.4 1.8 L9.6 5 Q7.6 6 5.4 5 Z" fill="#7cc850"/><path d="M0.6 5.8 Q2.6 4.8 4.4 5.8 L3.6 9 Q1.8 8 0 9 Z" fill="#4c8ce8"/><path d="M5.2 6 Q7.2 7 9.4 5.8 L8.6 9 Q6.6 10 4.4 9 Z" fill="#f4c830"/></svg></div>
<div style="left:21.8px;top:658.6px;font-size:9.9px;line-height:13px;font-style:italic;color:#fff;text-shadow:0.6px 0.8px 0.6px #1e5a1e;letter-spacing:0.2px;white-space:nowrap">Inicio</div>
<div class="tkb" style="left:70px;top:658.8px;width:98.6px;height:14.4px;"></div>
<div style="left:76px;top:661px;width:10px;height:10px"><svg viewBox="0 0 10 10" width="10" height="10" style="position:absolute;left:0;top:0"><path d="M0.5 2 H3.6 L4.4 3 H8.6 V8 H0.5 Z" fill="#f4d46c" stroke="#c89a28" stroke-width="0.6"/><path d="M0.5 8 L2 4.2 H9.6 L8.6 8 Z" fill="#fbe89a" stroke="#c89a28" stroke-width="0.5"/></svg></div>
<div class="tk" style="left:88.4px;top:661.4px">k4win</div>
<div class="tkb" style="left:170.6px;top:658.8px;width:98px;height:14.4px;"></div>
<div style="left:176.6px;top:661px;width:10px;height:10px"><svg viewBox="0 0 10 10" width="10" height="10" style="position:absolute;left:0;top:0"><path d="M0.8 2 H8.8 V8.4 H0.8 Z" fill="#f4d46c" stroke="#c89a28" stroke-width="0.6"/><rect x="2.4" y="1" width="5.4" height="5.4" fill="#e8eef8" stroke="#8890a8" stroke-width="0.5"/><rect x="3.4" y="2.2" width="3.4" height="2.6" fill="#5878c8"/></svg></div>
<div class="tk" style="left:189px;top:661.4px">Mis imágenes</div>
<div class="tkb" style="left:270.4px;top:658.8px;width:98.4px;height:14.4px;"></div>
<div style="left:276.4px;top:661px;width:10px;height:10px"><svg viewBox="0 0 10 10" width="10" height="10" style="position:absolute;left:0;top:0"><rect x="0.6" y="1" width="8.8" height="7.6" fill="#f0f0f0" stroke="#404858" stroke-width="0.7"/><rect x="1.4" y="1.8" width="7.2" height="6" fill="#3c9c48"/><path d="M1.4 1.8 H8.6 V4.6 L6 3.4 L3.4 5 L1.4 4 Z" fill="#3c5cb8"/></svg></div>
<div class="tk" style="left:288.8px;top:661.4px">k4 - Visor de imágene…</div>
<div class="tkb on" style="left:370px;top:658.8px;width:99.2px;height:14.4px;"></div>
<div style="left:376px;top:661px;width:10px;height:10px"><svg viewBox="0 0 10 10" width="10" height="10" style="position:absolute;left:0;top:0"><rect x="0" y="0.4" width="10" height="8.8" fill="#0c1418"/><path d="M1 2.4 H9" stroke="#a8b8c0" stroke-width="0.9"/><path d="M1.4 8.6 L5 4.6 V6.8 L8.6 4" stroke="#28d8e8" stroke-width="1.4" fill="none"/></svg></div>
<div class="tk" style="left:388.4px;top:661.4px">K4Win - TRANCE3.SYX</div>
<div class="tkb" style="left:470.8px;top:658.8px;width:98.4px;height:14.4px;"></div>
<div style="left:476.8px;top:661px;width:10px;height:10px"><svg viewBox="0 0 10 10" width="10" height="10" style="position:absolute;left:0;top:0"><circle cx="5" cy="5" r="4.3" fill="#e8403c"/><path d="M5 5 L1.2 3 A4.3 4.3 0 0 0 4.4 9.3 Z" fill="#38a850"/><path d="M5 5 L4.4 9.3 A4.3 4.3 0 0 0 9.2 4 Z" fill="#f8c820"/><circle cx="5" cy="5" r="2" fill="#fff"/><circle cx="5" cy="5" r="1.5" fill="#4880e8"/></svg></div>
<div class="tk" style="left:489.2px;top:661.4px">Usuarios K4. Emulació…</div>
<div class="tk" style="left:1075.6px;top:661.2px">ES</div>
<div class="" style="left:1097.4px;top:656.4px;width:102.6px;height:18.6px;background:linear-gradient(180deg,#18a0f0 0,#1290e8 20%,#0f8ce6 80%,#0c78d0 100%);border-left:1px solid #0c50a8;box-shadow:inset 1px 0 0 #38b0f8"></div>
<div style="left:1103.6px;top:660.4px;width:10px;height:10px"><svg viewBox="0 0 10 10" width="10" height="10" style="position:absolute;left:0;top:0"><path d="M1 7 L4 3 L6 5 L9 1.4" stroke="#d83c3c" stroke-width="1.6" fill="none"/><circle cx="3" cy="7" r="1.8" fill="#c8d0e0"/><circle cx="7.6" cy="6.4" r="1.6" fill="#e8e8f0"/></svg></div>
<div style="left:1115.8px;top:660.4px;width:10px;height:10px"><svg viewBox="0 0 10 10" width="10" height="10" style="position:absolute;left:0;top:0"><circle cx="5" cy="3.8" r="3.4" fill="#48b848" stroke="#e8f0e8" stroke-width="0.9"/><path d="M2.4 6.4 L1.4 9.8 L5 8.2 L8.6 9.8 L7.6 6.4" fill="#e8e8e0"/></svg></div>
<div style="left:1126px;top:660.4px;width:10px;height:10px"><svg viewBox="0 0 10 10" width="10" height="10" style="position:absolute;left:0;top:0"><rect x="3.4" y="0.8" width="5.6" height="4.6" fill="#2c3c78" stroke="#c8d0e8" stroke-width="0.7"/><rect x="0.8" y="3.6" width="5.6" height="4.6" fill="#3c58a8" stroke="#c8d0e8" stroke-width="0.7"/></svg></div>
<div style="left:1137.2px;top:660.4px;width:10px;height:10px"><svg viewBox="0 0 10 10" width="10" height="10" style="position:absolute;left:0;top:0"><path d="M5 0.6 L9 2 Q9 7 5 9.6 Q1 7 1 2 Z" fill="#d82838" stroke="#f0d8d8" stroke-width="0.6"/><path d="M3.4 3.6 L6.6 6.8 M6.6 3.6 L3.4 6.8" stroke="#fff" stroke-width="1.1"/></svg></div>
<div style="left:1148.6px;top:660.4px;width:10px;height:10px"><svg viewBox="0 0 10 10" width="10" height="10" style="position:absolute;left:0;top:0"><path d="M5 0.8 L9.8 9.2 H0.2 Z" fill="#e84020" stroke="#f8e0d0" stroke-width="0.5"/><path d="M5 3.6 V6.6 M5 7.4 V8.4" stroke="#fff" stroke-width="1.1"/></svg></div>
<div style="left:1160px;top:660.4px;width:10px;height:10px"><svg viewBox="0 0 10 10" width="10" height="10" style="position:absolute;left:0;top:0"><circle cx="5" cy="5" r="4.7" fill="#d81c2c"/><path d="M1.6 2.4 L8.4 5 L1.6 7.8 L3.6 5 Z" fill="#fff"/></svg></div>
<div class="tk" style="left:1175.8px;top:661.2px;font-size:6.8px">0:06</div>
</div></body></html>
